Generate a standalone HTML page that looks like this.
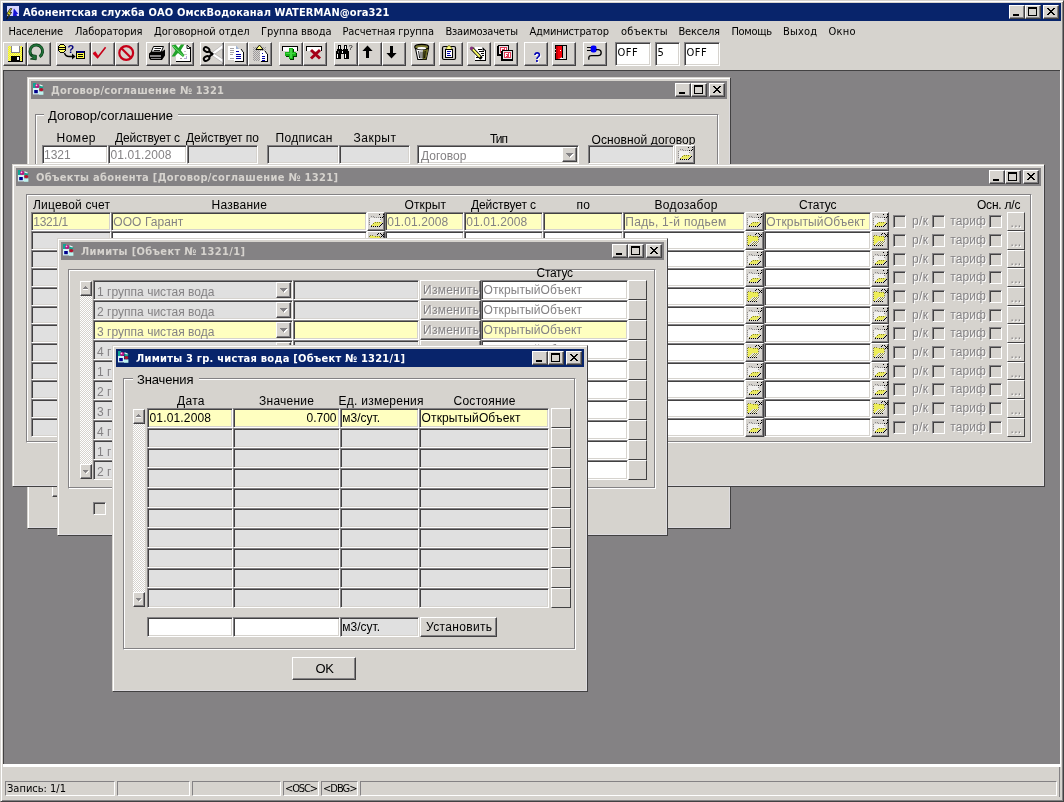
<!DOCTYPE html><html lang="ru"><head><meta charset="utf-8"><title>Абонентская служба ОАО ОмскВодоканал</title>
<style>

html,body{margin:0;padding:0}
body{width:1064px;height:802px;overflow:hidden;background:#d6d3ce;position:relative;font-family:"Liberation Sans",sans-serif;}
div,span,svg{box-sizing:border-box}
body div{position:absolute}
#root{left:0;top:0;width:1064px;height:802px;will-change:transform;}
.t{position:absolute;white-space:pre;}
.tt{font-family:"DejaVu Sans Condensed","DejaVu Sans","Liberation Sans",sans-serif;font-stretch:condensed}
.f{border:1px solid;border-color:#848284 #ffffff #ffffff #848284;box-shadow:inset 1px 1px 0 #424142, inset -1px -1px 0 #d6d3ce;}
.b{background:#d6d3ce;border:1px solid;border-color:#ffffff #424142 #424142 #ffffff;box-shadow:inset -1px -1px 0 #848284;}
.b1{background:#d6d3ce;border:1px solid;border-color:#ffffff #424142 #424142 #ffffff;}
.cb{background:#d6d3ce;border:1px solid;border-color:#ffffff #424142 #424142 #ffffff;box-shadow:inset -1px -1px 0 #848284, inset 1px 1px 0 #d6d3ce;}
.w{background:#d6d3ce;border:1px solid;border-color:#d6d3ce #424142 #424142 #d6d3ce;box-shadow:inset 1px 1px 0 #ffffff, inset -1px -1px 0 #848284;}
.wc{background:#d6d3ce;border:1px solid;border-color:#d6d3ce #424142 #424142 #d6d3ce;box-shadow:inset 1px 1px 0 #ffffff, inset -1px -1px 0 #dedcdf;}
.e{border:1px solid;border-color:#848284 #ffffff #ffffff #848284;box-shadow:inset 1px 1px 0 #ffffff;}
.e:after{content:"";position:absolute;left:-1px;top:-1px;right:0;bottom:0;border:1px solid;border-color:transparent #848284 #848284 transparent;}
.ck{background:#d6d3ce;border:1px solid;border-color:#848284 #ffffff #ffffff #848284;box-shadow:inset 1px 1px 0 #424142, inset -1px -1px 0 #d6d3ce;}
.sf{border:1px solid;border-color:#848284 #ffffff #ffffff #848284;}
.dith{background-image:repeating-conic-gradient(#ffffff 0% 25%, #d6d3ce 0% 50%);background-size:2px 2px;}
.dis{color:#848284;text-shadow:1px 1px 0 #ffffff;}

</style></head><body><div id="root">
<div class="w" style="left:0px;top:0px;width:1064px;height:802px;"></div>
<div class="" style="left:3px;top:3px;width:1058px;height:18px;background:#08246b;"></div>
<div style="left:5px;top:5px;width:15px;height:15px"><svg width="15" height="15" viewBox="5 5 15 15"><rect x="7" y="6" width="12" height="10" fill="#d6d7ff" shape-rendering="crispEdges"/><path d="M14 8.5L18.3 14H16.6L17 16H13L13.6 9.5Z" fill="#1414d6"/><path d="M10.2 8.6L6.6 14.2H8.8L6.8 19.2L11.6 12.4H9.6L11.8 8.6Z" fill="#e7e71c" stroke="#101010" stroke-width="0.8"/></svg></div>
<span id="t1" class="t tt" style="top:7px;font-size:11px;line-height:11px;color:#fff;left:23.00px;font-weight:bold;letter-spacing:0.131px;">Абонентская служба ОАО ОмскВодоканал WATERMAN@ora321</span>
<div class="cb" style="left:1043px;top:5px;width:16px;height:14px;"><svg width="8" height="7" viewBox="0 0 8 7" shape-rendering="crispEdges" style="position:absolute;left:3px;top:2px"><path d="M0 0h2v1h1v1h2v-1h1v-1h2v1h-1v1h-1v1h-1v1h1v1h1v1h1v1h-2v-1h-1v-1h-2v1h-1v1h-2v-1h1v-1h1v-1h1v-1h-1v-1h-1v-1h-1z" fill="#000"/></svg></div>
<div class="cb" style="left:1025px;top:5px;width:16px;height:14px;"><svg width="9" height="9" viewBox="0 0 9 9" shape-rendering="crispEdges" style="position:absolute;left:2px;top:1px"><path d="M0 0h9v9h-9zM1 2v6h7v-6z" fill="#000" fill-rule="evenodd"/></svg></div>
<div class="cb" style="left:1009px;top:5px;width:16px;height:14px;"><svg width="6" height="2" viewBox="0 0 6 2" shape-rendering="crispEdges" style="position:absolute;left:3px;top:8px"><rect width="6" height="2" fill="#000"/></svg></div>
<span id="t2" class="t tt" style="top:26px;font-size:11px;line-height:11px;color:#000;left:8.50px;letter-spacing:-0.244px;">Население</span>
<span id="t3" class="t tt" style="top:26px;font-size:11px;line-height:11px;color:#000;left:75.00px;letter-spacing:-0.100px;">Лаборатория</span>
<span id="t4" class="t tt" style="top:26px;font-size:11px;line-height:11px;color:#000;left:154.00px;letter-spacing:-0.059px;">Договорной отдел</span>
<span id="t5" class="t tt" style="top:26px;font-size:11px;line-height:11px;color:#000;left:261.00px;letter-spacing:-0.041px;">Группа ввода</span>
<span id="t6" class="t tt" style="top:26px;font-size:11px;line-height:11px;color:#000;left:342.50px;letter-spacing:-0.110px;">Расчетная группа</span>
<span id="t7" class="t tt" style="top:26px;font-size:11px;line-height:11px;color:#000;left:445.50px;letter-spacing:-0.220px;">Взаимозачеты</span>
<span id="t8" class="t tt" style="top:26px;font-size:11px;line-height:11px;color:#000;left:529.50px;letter-spacing:-0.214px;">Администратор</span>
<span id="t9" class="t tt" style="top:26px;font-size:11px;line-height:11px;color:#000;left:621.00px;letter-spacing:0.284px;">объекты</span>
<span id="t10" class="t tt" style="top:26px;font-size:11px;line-height:11px;color:#000;left:678.50px;letter-spacing:-0.195px;">Векселя</span>
<span id="t11" class="t tt" style="top:26px;font-size:11px;line-height:11px;color:#000;left:731.50px;letter-spacing:-0.338px;">Помощь</span>
<span id="t12" class="t tt" style="top:26px;font-size:11px;line-height:11px;color:#000;left:783.00px;letter-spacing:0.160px;">Выход</span>
<span id="t13" class="t tt" style="top:26px;font-size:11px;line-height:11px;color:#000;left:828.50px;letter-spacing:0.234px;">Окно</span>
<div class="b" style="left:3px;top:42px;width:24px;height:24px;"><svg width="24" height="24" viewBox="3 42 24 24" style="position:absolute;left:-1px;top:-1px"><defs><pattern id="dy" width="2" height="2" patternUnits="userSpaceOnUse"><rect width="2" height="2" fill="#ffff00"/><rect width="1" height="1" fill="#e7e794"/><rect x="1" y="1" width="1" height="1" fill="#e7e794"/></pattern></defs><g shape-rendering="crispEdges"><rect x="8" y="46" width="15" height="16" fill="#000" /><rect x="8" y="46" width="14" height="15" fill="url(#dy)" /><rect x="11" y="46" width="9" height="7" fill="#848284" /><rect x="12" y="46" width="7" height="6" fill="#fff" /><rect x="11" y="56" width="9" height="6" fill="#000" /><rect x="17" y="57" width="2" height="3" fill="#fff" /><rect x="22" y="46" width="1" height="1" fill="#d6d3ce" /></g></svg></div>
<div class="b" style="left:27px;top:42px;width:24px;height:24px;"><svg width="24" height="24" viewBox="27 42 24 24" style="position:absolute;left:-1px;top:-1px"><path d="M39.6 56.6A6.3 6.3 0 1 0 32.4 56.2" fill="none" stroke="#0c3c18" stroke-width="3"/><path d="M39.6 56.6A6.3 6.3 0 1 0 32.4 56.2" fill="none" stroke="#21753a" stroke-width="1.5"/><path d="M30.6 54.6L36.4 55.4L36.2 59.8L30.4 59L33.2 58Z" fill="#21753a" stroke="#0c3c18" stroke-width="0.9"/></svg></div>
<div class="b" style="left:56px;top:42px;width:35px;height:24px;"><svg width="35" height="24" viewBox="56 42 35 24" style="position:absolute;left:-1px;top:-1px"><g shape-rendering="crispEdges"><rect x="58" y="46" width="8" height="5" fill="#000" /><rect x="59" y="45" width="6" height="7" fill="#000" /><rect x="60" y="44" width="4" height="9" fill="#000" /><rect x="60" y="45" width="4" height="1" fill="#ffff63" /><rect x="59" y="46" width="6" height="1" fill="#ffff63" /><rect x="59" y="48" width="6" height="1" fill="#ffff63" /><rect x="59" y="50" width="6" height="1" fill="#ffff63" /><rect x="60" y="51" width="4" height="1" fill="#ffff63" /><rect x="76" y="51" width="9" height="8" fill="#000" /><rect x="77" y="51" width="7" height="2" fill="#00007b" /><rect x="77" y="53" width="7" height="5" fill="#ffff42" /><rect x="78" y="54" width="5" height="1" fill="#000" /><rect x="78" y="56" width="5" height="1" fill="#000" /></g><path d="M64.5 53Q65.5 56.5 69 56.5H73" fill="none" stroke="#000" stroke-width="1.3"/><path d="M72 53.5L75.5 56.5L72 59.5Z" fill="#000"/><text x="67.6" y="53" font-family="Liberation Sans,sans-serif" font-weight="bold" font-size="11" fill="#00007b">?</text></svg></div>
<div class="b" style="left:91px;top:42px;width:24px;height:24px;"><svg width="24" height="24" viewBox="91 42 24 24" style="position:absolute;left:-1px;top:-1px"><path d="M93.3 53.2L97.6 57.6L105.6 47.2" fill="none" stroke="#c60018" stroke-width="1.6"/><path d="M93 53L95.3 51.2L98 55.3L97.4 58.2Z" fill="#d6001c"/></svg></div>
<div class="b" style="left:115px;top:42px;width:24px;height:24px;"><svg width="24" height="24" viewBox="115 42 24 24" style="position:absolute;left:-1px;top:-1px"><circle cx="126.2" cy="53" r="6.9" fill="none" stroke="#c60018" stroke-width="2.2"/><path d="M121.2 48L131.2 58" stroke="#c60018" stroke-width="2.2"/></svg></div>
<div class="b" style="left:146px;top:42px;width:24px;height:24px;"><svg width="24" height="24" viewBox="146 42 24 24" style="position:absolute;left:-1px;top:-1px"><path d="M153.5 46.5H163.5L161 52.5H151Z" fill="#fff" stroke="#000" stroke-width="1"/><path d="M154.5 48.5H161M153.8 50.5H160" stroke="#000" stroke-width="0.9"/><path d="M149 53.5L151.5 51.5H162L165 49.5V55.5L162 60H150.5L149 58Z" fill="#000"/><g shape-rendering="crispEdges"><rect x="150" y="55" width="11" height="2" fill="#848284" /><rect x="151" y="58" width="10" height="1" fill="#848284" /></g></svg></div>
<div class="b" style="left:170px;top:42px;width:24px;height:24px;"><svg width="24" height="24" viewBox="170 42 24 24" style="position:absolute;left:-1px;top:-1px"><g shape-rendering="crispEdges"><rect x="176" y="45" width="12" height="17" fill="#fff" /><rect x="188" y="47" width="2" height="15" fill="#fff" /><rect x="190" y="47" width="1" height="15" fill="#000" /><rect x="176" y="61" width="15" height="1" fill="#000" /><rect x="176" y="62" width="15" height="0" fill="#000" /><rect x="184" y="51" width="2" height="1" fill="#c6c3c6" /><rect x="184" y="54" width="3" height="1" fill="#c6c3c6" /><rect x="180" y="58" width="2" height="1" fill="#b59ca5" /><rect x="184" y="58" width="3" height="1" fill="#b5aad6" /><rect x="186" y="56" width="1" height="2" fill="#b5aad6" /></g><path d="M187 45L190.5 48.5H187Z" fill="#fff" stroke="#000" stroke-width="0.9"/><path d="M171.6 45.6L175.6 44.6L178.4 48L181 44.6H184.4L180.8 50.2L184.4 55.2L183 57L178 53L174.6 56.4H171.6L175.4 50.4Z" fill="#21a229"/><path d="M173 46L183.5 56" stroke="#7be77b" stroke-width="0.9"/></svg></div>
<div class="b" style="left:200px;top:42px;width:24px;height:24px;"><svg width="24" height="24" viewBox="200 42 24 24" style="position:absolute;left:-1px;top:-1px"><path d="M211.5 53L222.6 44.6V48.4L214 54.6Z" fill="#fff" stroke="#9c9a9c" stroke-width="0.5"/><path d="M211.5 55L222.6 62.6V59L214 53.4Z" fill="#fff" stroke="#9c9a9c" stroke-width="0.5"/><ellipse cx="206.6" cy="49.6" rx="3" ry="2.1" transform="rotate(30 206.6 49.6)" fill="none" stroke="#000" stroke-width="1.9"/><ellipse cx="206.6" cy="58.4" rx="3" ry="2.1" transform="rotate(-30 206.6 58.4)" fill="none" stroke="#000" stroke-width="1.9"/><path d="M209 51L213 55M209 57L213 53" stroke="#000" stroke-width="2.2"/></svg></div>
<div class="b" style="left:224px;top:42px;width:24px;height:24px;"><svg width="24" height="24" viewBox="224 42 24 24" style="position:absolute;left:-1px;top:-1px"><g shape-rendering="crispEdges"><rect x="228" y="46" width="8" height="14" fill="#fff" /><rect x="230" y="48" width="4" height="1" fill="#a5a2a5" /><rect x="230" y="50" width="4" height="1" fill="#a5a2a5" /><rect x="230" y="52" width="4" height="1" fill="#a5a2a5" /><rect x="230" y="54" width="3" height="1" fill="#a5a2a5" /><rect x="230" y="58" width="4" height="1" fill="#a5a2a5" /></g><path d="M236 45.5L239 49H236Z" fill="#9cb2d6"/><g shape-rendering="crispEdges"><rect x="234" y="49" width="7" height="12" fill="#fff" /><rect x="241" y="52" width="2" height="9" fill="#fff" /><rect x="243" y="52" width="1" height="10" fill="#000" /><rect x="235" y="61" width="9" height="1" fill="#000" /><rect x="236" y="51" width="3" height="1" fill="#0000a5" /><rect x="236" y="54" width="5" height="1" fill="#0000a5" /><rect x="236" y="56" width="5" height="1" fill="#0000a5" /><rect x="236" y="58" width="5" height="1" fill="#0000a5" /></g><path d="M241 49L244 52H241Z" fill="#fff"/><path d="M241 49L243.5 52.5" stroke="#000" stroke-width="1"/></svg></div>
<div class="b" style="left:248px;top:42px;width:24px;height:24px;"><svg width="24" height="24" viewBox="248 42 24 24" style="position:absolute;left:-1px;top:-1px"><defs><pattern id="dg" width="2" height="2" patternUnits="userSpaceOnUse"><rect width="2" height="2" fill="#d6d3ce"/><rect width="1" height="1" fill="#9c9a9c"/><rect x="1" y="1" width="1" height="1" fill="#9c9a9c"/></pattern></defs><g shape-rendering="crispEdges"><rect x="253" y="47" width="13" height="14" fill="url(#dg)" /></g><path d="M256 49.5L258 46.5Q259.5 44.5 261 46.5L263 49.5Z" fill="#ffff84" stroke="#000" stroke-width="1"/><g shape-rendering="crispEdges"><rect x="260" y="51" width="5" height="10" fill="#fff" /><rect x="265" y="54" width="2" height="7" fill="#fff" /><rect x="267" y="54" width="1" height="8" fill="#000" /><rect x="261" y="61" width="7" height="1" fill="#000" /><rect x="262" y="53" width="1" height="1" fill="#0000a5" /><rect x="262" y="56" width="3" height="1" fill="#0000a5" /><rect x="262" y="58" width="3" height="1" fill="#0000a5" /><rect x="262" y="60" width="3" height="1" fill="#0000a5" /></g><path d="M265 51L268 54H265Z" fill="#fff"/><path d="M265 51L267.5 54.5" stroke="#000" stroke-width="1"/></svg></div>
<div class="b" style="left:279px;top:42px;width:24px;height:24px;"><svg width="24" height="24" viewBox="279 42 24 24" style="position:absolute;left:-1px;top:-1px"><g shape-rendering="crispEdges"><rect x="282" y="46" width="16" height="5" fill="#000" /><rect x="283" y="47" width="14" height="4" fill="#fff" /><rect x="290" y="49" width="4" height="11" fill="#003c00" /><rect x="286" y="53" width="11" height="4" fill="#003c00" /><rect x="289" y="48" width="4" height="11" fill="#18b218" /><rect x="285" y="52" width="11" height="4" fill="#18b218" /><rect x="290" y="49" width="2" height="9" fill="#42d742" /><rect x="286" y="53" width="9" height="1" fill="#42d742" /></g></svg></div>
<div class="b" style="left:303px;top:42px;width:24px;height:24px;"><svg width="24" height="24" viewBox="303 42 24 24" style="position:absolute;left:-1px;top:-1px"><g shape-rendering="crispEdges"><rect x="306" y="46" width="16" height="5" fill="#000" /><rect x="307" y="47" width="14" height="4" fill="#fff" /></g><path d="M311 50L320 58.5M320 50L311 58.5" stroke="#a50018" stroke-width="3"/></svg></div>
<div class="b" style="left:334px;top:42px;width:24px;height:24px;"><svg width="24" height="24" viewBox="334 42 24 24" style="position:absolute;left:-1px;top:-1px"><g shape-rendering="crispEdges"><rect x="338" y="45" width="3" height="4" fill="#000" /><rect x="344" y="45" width="3" height="4" fill="#000" /><rect x="339" y="46" width="1" height="3" fill="#fff" /><rect x="345" y="46" width="1" height="3" fill="#fff" /><rect x="337" y="49" width="5" height="4" fill="#000" /><rect x="343" y="49" width="5" height="4" fill="#000" /><rect x="336" y="51" width="5" height="8" fill="#000" /><rect x="344" y="51" width="5" height="8" fill="#000" /><rect x="341" y="50" width="3" height="4" fill="#000" /><rect x="337" y="54" width="1" height="4" fill="#fff" /><rect x="345" y="54" width="1" height="4" fill="#fff" /><rect x="342" y="51" width="1" height="2" fill="#fff" /><rect x="338" y="51" width="1" height="2" fill="#5a595a" /></g><text x="348.6" y="50" font-family="Liberation Sans,sans-serif" font-size="7.5" fill="#000">?</text></svg></div>
<div class="b" style="left:358px;top:42px;width:24px;height:24px;"><svg width="24" height="24" viewBox="358 42 24 24" style="position:absolute;left:-1px;top:-1px"><path d="M367.5 45.6L372.6 51H369V58H366V51H362.4Z" fill="#000"/></svg></div>
<div class="b" style="left:382px;top:42px;width:24px;height:24px;"><svg width="24" height="24" viewBox="382 42 24 24" style="position:absolute;left:-1px;top:-1px"><path d="M391.5 58.4L396.6 53H393V46H390V53H386.4Z" fill="#000"/></svg></div>
<div class="b" style="left:411px;top:42px;width:24px;height:24px;"><svg width="24" height="24" viewBox="411 42 24 24" style="position:absolute;left:-1px;top:-1px"><path d="M415.5 48.5L417.8 59.5H426.2L428.5 48.5Z" fill="#fff" stroke="#000" stroke-width="1.1"/><path d="M423 49L422.5 59.2H426L428.2 49Z" fill="#6b6921"/><ellipse cx="421.7" cy="47" rx="7" ry="2.6" fill="#7b7931" stroke="#000" stroke-width="1.1"/><ellipse cx="421.7" cy="48.2" rx="4.4" ry="1.2" fill="#fff"/><path d="M418.6 51L419.6 58M421 51.5V58.5M423 51.5V58.5M425.2 51L424.6 58" stroke="#000" stroke-width="0.9"/></svg></div>
<div class="b" style="left:439px;top:42px;width:24px;height:24px;"><svg width="24" height="24" viewBox="439 42 24 24" style="position:absolute;left:-1px;top:-1px"><rect x="442.5" y="46.5" width="13" height="13" rx="1.5" fill="#d6d3ce" stroke="#000" stroke-width="1.2"/><path d="M445.5 49.5L447.5 46.5Q449 44.5 450.5 46.5L452.5 49.5Z" fill="#ffff84" stroke="#5a5900" stroke-width="0.8"/><g shape-rendering="crispEdges"><rect x="445" y="49" width="8" height="9" fill="#000" /><rect x="446" y="50" width="6" height="7" fill="#fff" /><rect x="447" y="51" width="4" height="1" fill="#0000a5" /><rect x="447" y="53" width="3" height="1" fill="#0000a5" /><rect x="447" y="55" width="4" height="1" fill="#0000a5" /></g></svg></div>
<div class="b" style="left:467px;top:42px;width:24px;height:24px;"><svg width="24" height="24" viewBox="467 42 24 24" style="position:absolute;left:-1px;top:-1px"><g shape-rendering="crispEdges"><rect x="475" y="47" width="8" height="13" fill="#fff" /><rect x="483" y="50" width="2" height="10" fill="#fff" /><rect x="485" y="50" width="1" height="11" fill="#000" /><rect x="475" y="60" width="11" height="1" fill="#000" /><rect x="478" y="49" width="4" height="1" fill="#000" /><rect x="479" y="51" width="5" height="1" fill="#000" /><rect x="481" y="53" width="3" height="1" fill="#000" /><rect x="482" y="55" width="2" height="1" fill="#000" /><rect x="476" y="57" width="3" height="1" fill="#000" /><rect x="477" y="55" width="2" height="1" fill="#000" /></g><path d="M482.5 47L486 50.5H482.5Z" fill="#000"/><path d="M471.5 48L481.5 58.5" stroke="#000" stroke-width="3.4"/><path d="M472.6 49.1L480 57" stroke="#f7f763" stroke-width="1.9"/><circle cx="471.6" cy="48.2" r="1.7" fill="#84307b"/><path d="M480 57L482.3 59.3L479.2 58.4Z" fill="#000"/></svg></div>
<div class="b" style="left:494px;top:42px;width:24px;height:24px;"><svg width="24" height="24" viewBox="494 42 24 24" style="position:absolute;left:-1px;top:-1px"><g shape-rendering="crispEdges"><rect x="497" y="46" width="12" height="10" fill="#000" /><rect x="498" y="45" width="11" height="10" fill="#000" /><rect x="499" y="46" width="9" height="8" fill="#e7e3e7" /><rect x="500" y="47" width="7" height="6" fill="#e0405a" /><rect x="501" y="48" width="1" height="4" fill="#fff" /><rect x="502" y="48" width="2" height="1" fill="#fff" /><rect x="502" y="50" width="1" height="1" fill="#fff" /><rect x="505" y="48" width="1" height="4" fill="#fff" /><rect x="501" y="51" width="12" height="10" fill="#000" /><rect x="502" y="50" width="11" height="10" fill="#000" /><rect x="503" y="51" width="9" height="8" fill="#e7e3e7" /><rect x="504" y="52" width="7" height="6" fill="#e0405a" /><rect x="505" y="53" width="1" height="4" fill="#fff" /><rect x="506" y="53" width="2" height="1" fill="#fff" /><rect x="506" y="55" width="1" height="1" fill="#fff" /><rect x="509" y="53" width="1" height="4" fill="#fff" /></g></svg></div>
<div class="b" style="left:524px;top:42px;width:24px;height:24px;"><svg width="24" height="24" viewBox="524 42 24 24" style="position:absolute;left:-1px;top:-1px"><text x="534.4" y="62.6" font-family="Liberation Sans,sans-serif" font-weight="bold" font-size="14" textLength="7.4" lengthAdjust="spacingAndGlyphs" fill="#fff">?</text><text x="533.6" y="62" font-family="Liberation Sans,sans-serif" font-weight="bold" font-size="14" textLength="7.4" lengthAdjust="spacingAndGlyphs" fill="#0000b5">?</text></svg></div>
<div class="b" style="left:552px;top:42px;width:24px;height:24px;"><svg width="24" height="24" viewBox="552 42 24 24" style="position:absolute;left:-1px;top:-1px"><g shape-rendering="crispEdges"><rect x="555" y="45" width="12" height="15" fill="#000" /><rect x="556" y="46" width="10" height="13" fill="#d6d3ce" /><rect x="562" y="46" width="1" height="12" fill="#000" /><rect x="559" y="58" width="4" height="1" fill="#fff" /></g><path d="M556 46H562V57L559.5 58.8H556Z" fill="#f70008"/><path d="M556 46H558V59H556Z" fill="#c60008"/><g shape-rendering="crispEdges"><rect x="560" y="50" width="1" height="1" fill="#fff" /><rect x="555" y="49" width="1" height="1" fill="#d6d3ce" /><rect x="555" y="52" width="1" height="1" fill="#d6d3ce" /></g></svg></div>
<div class="b" style="left:583px;top:42px;width:24px;height:24px;"><svg width="24" height="24" viewBox="583 42 24 24" style="position:absolute;left:-1px;top:-1px"><g shape-rendering="crispEdges"><rect x="587" y="47" width="5" height="1" fill="#000"/><rect x="587" y="50" width="5" height="1" fill="#000"/></g><rect x="590.6" y="45.6" width="6" height="7" rx="2.4" fill="#0000f7"/><path d="M596 49.6H598.5Q601.3 50 601.2 53Q601 55.6 598 55.6H591.5Q589 55.6 588.8 57.5V59.8" fill="none" stroke="#000" stroke-width="1.3"/></svg></div>
<div class="f" style="left:615px;top:42px;width:36px;height:24px;background:#ffffff;"></div>
<span id="t14" class="t tt" style="top:47px;font-size:11px;line-height:11px;color:#000;left:617.40px;letter-spacing:0.606px;">OFF</span>
<div class="f" style="left:655px;top:42px;width:25px;height:24px;background:#ffffff;"></div>
<span id="t15" class="t tt" style="top:47px;font-size:11px;line-height:11px;color:#000;left:657.40px;">5</span>
<div class="f" style="left:684px;top:42px;width:36px;height:24px;background:#ffffff;"></div>
<span id="t16" class="t tt" style="top:47px;font-size:11px;line-height:11px;color:#000;left:686.40px;letter-spacing:0.606px;">OFF</span>
<div class="" style="left:3px;top:70px;width:1058px;height:697px;background:#ffffff;"></div>
<div class="" style="left:3px;top:70px;width:1057px;height:694px;background:#848284;border-top:1px solid #424142;border-left:1px solid #424142;"></div>
<div class="" style="left:1059px;top:767px;width:1px;height:30px;background:#848284;"></div>
<div class="wc" style="left:27px;top:77px;width:704px;height:452px;"></div>
<div class="tb" style="left:31px;top:81px;width:696px;height:18px;background:#848284;"></div>
<div style="left:33px;top:82px;width:12px;height:13px"><svg width="12" height="13" viewBox="0 0 12 13"><rect x="0" y="0" width="3" height="6" fill="#10a694"/><rect x="0" y="5" width="6" height="6.4" fill="#d6f3f7"/><rect x="6" y="8.4" width="4.4" height="3.4" fill="#bdf3ef"/><path d="M6.4 2.2L10.6 3.4L9.6 5.6H6.6Z" fill="#18a28c"/><path d="M6.6 1.2L9.8 2.6L9.4 3.4L6.4 2.4Z" fill="#e7f7f7"/><rect x="1.2" y="7" width="3.6" height="3.2" fill="#00008c"/><ellipse cx="8.3" cy="6.6" rx="1.9" ry="1.7" fill="#b5102c"/><circle cx="4.1" cy="3" r="2.1" fill="#bd1084"/><circle cx="3.5" cy="2.4" r="0.8" fill="#ffc7ef"/></svg></div>
<span id="t17" class="t tt" style="top:85px;font-size:11px;line-height:11px;color:#d6d3ce;left:51.00px;font-weight:bold;letter-spacing:0.243px;">Договор/соглашение № 1321</span>
<div class="cb" style="left:709px;top:83px;width:16px;height:14px;"><svg width="8" height="7" viewBox="0 0 8 7" shape-rendering="crispEdges" style="position:absolute;left:3px;top:2px"><path d="M0 0h2v1h1v1h2v-1h1v-1h2v1h-1v1h-1v1h-1v1h1v1h1v1h1v1h-2v-1h-1v-1h-2v1h-1v1h-2v-1h1v-1h1v-1h1v-1h-1v-1h-1v-1h-1z" fill="#000"/></svg></div>
<div class="cb" style="left:691px;top:83px;width:16px;height:14px;"><svg width="9" height="9" viewBox="0 0 9 9" shape-rendering="crispEdges" style="position:absolute;left:2px;top:1px"><path d="M0 0h9v9h-9zM1 2v6h7v-6z" fill="#000" fill-rule="evenodd"/></svg></div>
<div class="cb" style="left:675px;top:83px;width:16px;height:14px;"><svg width="6" height="2" viewBox="0 0 6 2" shape-rendering="crispEdges" style="position:absolute;left:3px;top:8px"><rect width="6" height="2" fill="#000"/></svg></div>
<div class="e" style="left:35px;top:114px;width:684px;height:356px;"></div>
<div class="" style="left:44px;top:114px;width:134px;height:2px;background:#d6d3ce;"></div>
<span id="t18" class="t " style="top:109px;font-size:13px;line-height:13px;color:#000;left:48.00px;letter-spacing:-0.011px;">Договор/соглашение</span>
<span id="t19" class="t " style="top:132px;font-size:12px;line-height:12px;color:#000;left:56.50px;letter-spacing:0.516px;">Номер</span>
<span id="t20" class="t " style="top:132px;font-size:12px;line-height:12px;color:#000;left:115.00px;letter-spacing:-0.109px;">Действует с</span>
<span id="t21" class="t " style="top:132px;font-size:12px;line-height:12px;color:#000;left:186.00px;letter-spacing:-0.024px;">Действует по</span>
<span id="t22" class="t " style="top:132px;font-size:12px;line-height:12px;color:#000;left:275.50px;letter-spacing:0.350px;">Подписан</span>
<span id="t23" class="t " style="top:132px;font-size:12px;line-height:12px;color:#000;left:353.50px;letter-spacing:0.506px;">Закрыт</span>
<span id="t24" class="t " style="top:133px;font-size:12px;line-height:12px;color:#000;left:490.00px;letter-spacing:-1.008px;">Тип</span>
<span id="t25" class="t " style="top:134px;font-size:12px;line-height:12px;color:#000;left:591.50px;letter-spacing:0.106px;">Основной договор</span>
<div class="f" style="left:42px;top:145px;width:66px;height:19px;background:#ffffff;"></div>
<span id="t26" class="t " style="top:149px;font-size:12px;line-height:12px;color:#848284;left:44.00px;">1321</span>
<div class="f" style="left:108px;top:145px;width:79px;height:19px;background:#ffffff;"></div>
<span id="t27" class="t " style="top:149px;font-size:12px;line-height:12px;color:#848284;left:110.50px;letter-spacing:0.104px;">01.01.2008</span>
<div class="f" style="left:187px;top:145px;width:71px;height:19px;background:#e0e0e0;"></div>
<div class="f" style="left:267px;top:145px;width:72px;height:19px;background:#e0e0e0;"></div>
<div class="f" style="left:339px;top:145px;width:71px;height:19px;background:#e0e0e0;"></div>
<div class="f" style="left:417px;top:145px;width:162px;height:19px;background:#ffffff;"></div>
<span id="t28" class="t " style="top:150px;font-size:12px;line-height:12px;color:#848284;left:421.00px;">Договор</span>
<div class="b" style="left:562px;top:147px;width:15px;height:15px;"><svg width="7" height="4" viewBox="0 0 7 4" shape-rendering="crispEdges" style="position:absolute;left:3px;top:5px;overflow:visible"><path d="M1 1h7v1h-1v1h-1v1h-1v1h-1v-1h-1v-1h-1z" fill="#fff"/><path d="M0 0h7v1h-1v1h-1v1h-1v1h-1v-1h-1v-1h-1v-1h-1z" fill="#848284"/></svg></div>
<div class="f" style="left:588px;top:145px;width:86px;height:19px;background:#e0e0e0;"></div>
<div class="b" style="left:675px;top:145px;width:20px;height:19px;"><svg width="17" height="16" viewBox="0 0 17 16" style="position:absolute;left:1px;top:0px"><g shape-rendering="crispEdges"><path d="M2 5h11v4h-6l-5 4z" fill="#f1f0ee"/><path d="M3 13l3.5-4h7.5l-3 4z" fill="#e9e962"/><path d="M11 1h1v1h-1zM15 1h1v1h-1zM15 3h1v1h-1zM14 4h1v1h-1zM12 4h1v1h-1zM14 10h1v1h-1zM13 11h1v1h-1zM12 12h1v1h-1zM3 13h1v1h-1zM5 13h1v1h-1zM7 13h1v1h-1zM9 13h1v1h-1zM11 13h1v1h-1z" fill="#000"/><path d="M10 4h1v1h-1zM8 4h1v1h-1zM6 4h1v1h-1zM5 3h1v1h-1zM3 3h1v1h-1zM1 5h1v1h-1zM1 7h1v1h-1zM1 9h1v1h-1zM1 11h1v1h-1zM12 6h1v1h-1z" fill="#8c8a8c"/><path d="M7 9h1v1h-1zM9 9h1v1h-1zM11 9h1v1h-1zM5 10h1v1h-1zM3 12h1v1h-1z" fill="#84822a"/></g></svg></div>
<div class="b" style="left:52px;top:474px;width:88px;height:23px;"></div>
<div class="wc" style="left:12px;top:164px;width:1033px;height:323px;"></div>
<div class="tb" style="left:16px;top:168px;width:1025px;height:18px;background:#848284;"></div>
<div style="left:18px;top:169px;width:12px;height:13px"><svg width="12" height="13" viewBox="0 0 12 13"><rect x="0" y="0" width="3" height="6" fill="#10a694"/><rect x="0" y="5" width="6" height="6.4" fill="#d6f3f7"/><rect x="6" y="8.4" width="4.4" height="3.4" fill="#bdf3ef"/><path d="M6.4 2.2L10.6 3.4L9.6 5.6H6.6Z" fill="#18a28c"/><path d="M6.6 1.2L9.8 2.6L9.4 3.4L6.4 2.4Z" fill="#e7f7f7"/><rect x="1.2" y="7" width="3.6" height="3.2" fill="#00008c"/><ellipse cx="8.3" cy="6.6" rx="1.9" ry="1.7" fill="#b5102c"/><circle cx="4.1" cy="3" r="2.1" fill="#bd1084"/><circle cx="3.5" cy="2.4" r="0.8" fill="#ffc7ef"/></svg></div>
<span id="t29" class="t tt" style="top:172px;font-size:11px;line-height:11px;color:#d6d3ce;left:36.00px;font-weight:bold;letter-spacing:0.345px;">Объекты абонента [Договор/соглашение № 1321]</span>
<div class="cb" style="left:1023px;top:170px;width:16px;height:14px;"><svg width="8" height="7" viewBox="0 0 8 7" shape-rendering="crispEdges" style="position:absolute;left:3px;top:2px"><path d="M0 0h2v1h1v1h2v-1h1v-1h2v1h-1v1h-1v1h-1v1h1v1h1v1h1v1h-2v-1h-1v-1h-2v1h-1v1h-2v-1h1v-1h1v-1h1v-1h-1v-1h-1v-1h-1z" fill="#000"/></svg></div>
<div class="cb" style="left:1005px;top:170px;width:16px;height:14px;"><svg width="9" height="9" viewBox="0 0 9 9" shape-rendering="crispEdges" style="position:absolute;left:2px;top:1px"><path d="M0 0h9v9h-9zM1 2v6h7v-6z" fill="#000" fill-rule="evenodd"/></svg></div>
<div class="cb" style="left:989px;top:170px;width:16px;height:14px;"><svg width="6" height="2" viewBox="0 0 6 2" shape-rendering="crispEdges" style="position:absolute;left:3px;top:8px"><rect width="6" height="2" fill="#000"/></svg></div>
<div class="e" style="left:26px;top:194px;width:1006px;height:249px;"></div>
<span id="t30" class="t " style="top:199px;font-size:12px;line-height:12px;color:#000;left:33.00px;letter-spacing:0.196px;">Лицевой счет</span>
<span id="t31" class="t " style="top:199px;font-size:12px;line-height:12px;color:#000;left:211.50px;letter-spacing:0.268px;">Название</span>
<span id="t32" class="t " style="top:199px;font-size:12px;line-height:12px;color:#000;left:404.50px;letter-spacing:0.125px;">Открыт</span>
<span id="t33" class="t " style="top:199px;font-size:12px;line-height:12px;color:#000;left:471.00px;letter-spacing:-0.109px;">Действует с</span>
<span id="t34" class="t " style="top:199px;font-size:12px;line-height:12px;color:#000;left:576.50px;letter-spacing:0.328px;">по</span>
<span id="t35" class="t " style="top:199px;font-size:12px;line-height:12px;color:#000;left:654.50px;letter-spacing:0.330px;">Водозабор</span>
<span id="t36" class="t " style="top:199px;font-size:12px;line-height:12px;color:#000;left:799.00px;letter-spacing:-0.087px;">Статус</span>
<span id="t37" class="t " style="top:199px;font-size:12px;line-height:12px;color:#000;left:977.00px;letter-spacing:-0.210px;">Осн. л/с</span>
<div class="f" style="left:31px;top:212px;width:80px;height:19px;background:#ffffc0;"></div>
<span id="t38" class="t " style="top:216px;font-size:12px;line-height:12px;color:#848284;left:33.30px;letter-spacing:-0.341px;">1321/1</span>
<div class="f" style="left:111px;top:212px;width:256px;height:19px;background:#ffffc0;"></div>
<span id="t39" class="t " style="top:216px;font-size:12px;line-height:12px;color:#848284;left:113.30px;letter-spacing:0.076px;">ООО Гарант</span>
<div class="f" style="left:385px;top:212px;width:79px;height:19px;background:#ffffc0;"></div>
<span id="t40" class="t " style="top:216px;font-size:12px;line-height:12px;color:#848284;left:387.30px;letter-spacing:0.104px;">01.01.2008</span>
<div class="f" style="left:464px;top:212px;width:79px;height:19px;background:#ffffc0;"></div>
<span id="t41" class="t " style="top:216px;font-size:12px;line-height:12px;color:#848284;left:466.30px;letter-spacing:0.104px;">01.01.2008</span>
<div class="f" style="left:543px;top:212px;width:80px;height:19px;background:#ffffc0;"></div>
<div class="f" style="left:623px;top:212px;width:122px;height:19px;background:#ffffc0;"></div>
<span id="t42" class="t " style="top:216px;font-size:12px;line-height:12px;color:#848284;left:625.30px;letter-spacing:0.266px;">Падь, 1-й подьем</span>
<div class="f" style="left:764px;top:212px;width:107px;height:19px;background:#ffffc0;"></div>
<span id="t43" class="t " style="top:216px;font-size:12px;line-height:12px;color:#848284;left:766.30px;letter-spacing:0.148px;">ОткрытыйОбъект</span>
<div class="b" style="left:367px;top:212px;width:18px;height:19px;"><svg width="17" height="16" viewBox="0 0 17 16" style="position:absolute;left:0px;top:0px"><g shape-rendering="crispEdges"><path d="M2 5h11v4h-6l-5 4z" fill="#f1f0ee"/><path d="M3 13l3.5-4h7.5l-3 4z" fill="#e9e962"/><path d="M11 1h1v1h-1zM15 1h1v1h-1zM15 3h1v1h-1zM14 4h1v1h-1zM12 4h1v1h-1zM14 10h1v1h-1zM13 11h1v1h-1zM12 12h1v1h-1zM3 13h1v1h-1zM5 13h1v1h-1zM7 13h1v1h-1zM9 13h1v1h-1zM11 13h1v1h-1z" fill="#000"/><path d="M10 4h1v1h-1zM8 4h1v1h-1zM6 4h1v1h-1zM5 3h1v1h-1zM3 3h1v1h-1zM1 5h1v1h-1zM1 7h1v1h-1zM1 9h1v1h-1zM1 11h1v1h-1zM12 6h1v1h-1z" fill="#8c8a8c"/><path d="M7 9h1v1h-1zM9 9h1v1h-1zM11 9h1v1h-1zM5 10h1v1h-1zM3 12h1v1h-1z" fill="#84822a"/></g></svg></div>
<div class="b" style="left:745px;top:212px;width:19px;height:19px;"><svg width="17" height="16" viewBox="0 0 17 16" style="position:absolute;left:0px;top:0px"><g shape-rendering="crispEdges"><path d="M2 5h11v4h-6l-5 4z" fill="#f1f0ee"/><path d="M3 13l3.5-4h7.5l-3 4z" fill="#e9e962"/><path d="M11 1h1v1h-1zM15 1h1v1h-1zM15 3h1v1h-1zM14 4h1v1h-1zM12 4h1v1h-1zM14 10h1v1h-1zM13 11h1v1h-1zM12 12h1v1h-1zM3 13h1v1h-1zM5 13h1v1h-1zM7 13h1v1h-1zM9 13h1v1h-1zM11 13h1v1h-1z" fill="#000"/><path d="M10 4h1v1h-1zM8 4h1v1h-1zM6 4h1v1h-1zM5 3h1v1h-1zM3 3h1v1h-1zM1 5h1v1h-1zM1 7h1v1h-1zM1 9h1v1h-1zM1 11h1v1h-1zM12 6h1v1h-1z" fill="#8c8a8c"/><path d="M7 9h1v1h-1zM9 9h1v1h-1zM11 9h1v1h-1zM5 10h1v1h-1zM3 12h1v1h-1z" fill="#84822a"/></g></svg></div>
<div class="b" style="left:871px;top:212px;width:18px;height:19px;"><svg width="17" height="16" viewBox="0 0 17 16" style="position:absolute;left:0px;top:0px"><g shape-rendering="crispEdges"><path d="M2 5h11v4h-6l-5 4z" fill="#f1f0ee"/><path d="M3 13l3.5-4h7.5l-3 4z" fill="#e9e962"/><path d="M11 1h1v1h-1zM15 1h1v1h-1zM15 3h1v1h-1zM14 4h1v1h-1zM12 4h1v1h-1zM14 10h1v1h-1zM13 11h1v1h-1zM12 12h1v1h-1zM3 13h1v1h-1zM5 13h1v1h-1zM7 13h1v1h-1zM9 13h1v1h-1zM11 13h1v1h-1z" fill="#000"/><path d="M10 4h1v1h-1zM8 4h1v1h-1zM6 4h1v1h-1zM5 3h1v1h-1zM3 3h1v1h-1zM1 5h1v1h-1zM1 7h1v1h-1zM1 9h1v1h-1zM1 11h1v1h-1zM12 6h1v1h-1z" fill="#8c8a8c"/><path d="M7 9h1v1h-1zM9 9h1v1h-1zM11 9h1v1h-1zM5 10h1v1h-1zM3 12h1v1h-1z" fill="#84822a"/></g></svg></div>
<div class="ck" style="left:893px;top:215px;width:13px;height:13px;"></div>
<div class="ck" style="left:932px;top:215px;width:13px;height:13px;"></div>
<div class="ck" style="left:989px;top:215px;width:13px;height:13px;"></div>
<span id="t44" class="t dis" style="top:215px;font-size:12px;line-height:12px;color:#848284;left:912.00px;letter-spacing:0.367px;">р/к</span>
<span id="t45" class="t dis" style="top:215px;font-size:12px;line-height:12px;color:#848284;left:950.30px;letter-spacing:0.051px;">тариф</span>
<div class="b1" style="left:1007px;top:212px;width:18px;height:19px;"></div>
<span id="t46" class="t dis" style="top:217px;font-size:12px;line-height:12px;color:#848284;left:1010.50px;letter-spacing:0.292px;">...</span>
<div class="f" style="left:31px;top:231px;width:80px;height:19px;background:#e0e0e0;"></div>
<div class="f" style="left:111px;top:231px;width:256px;height:19px;background:#ffffff;"></div>
<div class="f" style="left:385px;top:231px;width:79px;height:19px;background:#ffffff;"></div>
<div class="f" style="left:464px;top:231px;width:79px;height:19px;background:#ffffff;"></div>
<div class="f" style="left:543px;top:231px;width:80px;height:19px;background:#ffffff;"></div>
<div class="f" style="left:623px;top:231px;width:122px;height:19px;background:#ffffff;"></div>
<div class="f" style="left:764px;top:231px;width:107px;height:19px;background:#ffffff;"></div>
<div class="b" style="left:367px;top:231px;width:18px;height:19px;"><svg width="17" height="16" viewBox="0 0 17 16" style="position:absolute;left:0px;top:-1px"><defs><pattern id="dl" width="2" height="2" patternUnits="userSpaceOnUse"><rect width="2" height="2" fill="#f1f0ee"/><rect width="1" height="1" fill="#8c8a4a"/><rect x="1" y="1" width="1" height="1" fill="#8c8a4a"/></pattern></defs><g shape-rendering="crispEdges"><path d="M2 5h10v5h-5l-5 4z" fill="#eded58"/><path d="M7 10h7l-3 4h-8z" fill="url(#dl)"/><path d="M10 2h1v1h-1zM12 2h1v1h-1zM9 3h1v1h-1zM13 3h1v1h-1zM15 3h1v1h-1zM14 4h1v1h-1zM13 5h1v1h-1zM15 5h1v1h-1zM2 14h1v1h-1zM4 14h1v1h-1zM6 14h1v1h-1zM8 14h1v1h-1zM10 14h1v1h-1z" fill="#000"/><path d="M2 4h1v1h-1zM4 4h1v1h-1zM1 5h1v1h-1zM1 7h1v1h-1zM1 9h1v1h-1zM1 11h1v1h-1zM1 13h1v1h-1zM7 5h1v1h-1zM9 5h1v1h-1zM11 5h1v1h-1zM12 6h1v1h-1zM12 8h1v1h-1z" fill="#84822a"/></g></svg></div>
<div class="b" style="left:745px;top:231px;width:19px;height:19px;"><svg width="17" height="16" viewBox="0 0 17 16" style="position:absolute;left:0px;top:-1px"><defs><pattern id="dl" width="2" height="2" patternUnits="userSpaceOnUse"><rect width="2" height="2" fill="#f1f0ee"/><rect width="1" height="1" fill="#8c8a4a"/><rect x="1" y="1" width="1" height="1" fill="#8c8a4a"/></pattern></defs><g shape-rendering="crispEdges"><path d="M2 5h10v5h-5l-5 4z" fill="#eded58"/><path d="M7 10h7l-3 4h-8z" fill="url(#dl)"/><path d="M10 2h1v1h-1zM12 2h1v1h-1zM9 3h1v1h-1zM13 3h1v1h-1zM15 3h1v1h-1zM14 4h1v1h-1zM13 5h1v1h-1zM15 5h1v1h-1zM2 14h1v1h-1zM4 14h1v1h-1zM6 14h1v1h-1zM8 14h1v1h-1zM10 14h1v1h-1z" fill="#000"/><path d="M2 4h1v1h-1zM4 4h1v1h-1zM1 5h1v1h-1zM1 7h1v1h-1zM1 9h1v1h-1zM1 11h1v1h-1zM1 13h1v1h-1zM7 5h1v1h-1zM9 5h1v1h-1zM11 5h1v1h-1zM12 6h1v1h-1zM12 8h1v1h-1z" fill="#84822a"/></g></svg></div>
<div class="b" style="left:871px;top:231px;width:18px;height:19px;"><svg width="17" height="16" viewBox="0 0 17 16" style="position:absolute;left:0px;top:-1px"><defs><pattern id="dl" width="2" height="2" patternUnits="userSpaceOnUse"><rect width="2" height="2" fill="#f1f0ee"/><rect width="1" height="1" fill="#8c8a4a"/><rect x="1" y="1" width="1" height="1" fill="#8c8a4a"/></pattern></defs><g shape-rendering="crispEdges"><path d="M2 5h10v5h-5l-5 4z" fill="#eded58"/><path d="M7 10h7l-3 4h-8z" fill="url(#dl)"/><path d="M10 2h1v1h-1zM12 2h1v1h-1zM9 3h1v1h-1zM13 3h1v1h-1zM15 3h1v1h-1zM14 4h1v1h-1zM13 5h1v1h-1zM15 5h1v1h-1zM2 14h1v1h-1zM4 14h1v1h-1zM6 14h1v1h-1zM8 14h1v1h-1zM10 14h1v1h-1z" fill="#000"/><path d="M2 4h1v1h-1zM4 4h1v1h-1zM1 5h1v1h-1zM1 7h1v1h-1zM1 9h1v1h-1zM1 11h1v1h-1zM1 13h1v1h-1zM7 5h1v1h-1zM9 5h1v1h-1zM11 5h1v1h-1zM12 6h1v1h-1zM12 8h1v1h-1z" fill="#84822a"/></g></svg></div>
<div class="ck" style="left:893px;top:234px;width:13px;height:13px;"></div>
<div class="ck" style="left:932px;top:234px;width:13px;height:13px;"></div>
<div class="ck" style="left:989px;top:234px;width:13px;height:13px;"></div>
<span id="t47" class="t dis" style="top:234px;font-size:12px;line-height:12px;color:#848284;left:912.00px;letter-spacing:0.367px;">р/к</span>
<span id="t48" class="t dis" style="top:234px;font-size:12px;line-height:12px;color:#848284;left:950.30px;letter-spacing:0.051px;">тариф</span>
<div class="b1" style="left:1007px;top:231px;width:18px;height:19px;"></div>
<span id="t49" class="t dis" style="top:236px;font-size:12px;line-height:12px;color:#848284;left:1010.50px;letter-spacing:0.292px;">...</span>
<div class="f" style="left:31px;top:250px;width:80px;height:18px;background:#e0e0e0;"></div>
<div class="f" style="left:111px;top:250px;width:256px;height:18px;background:#ffffff;"></div>
<div class="f" style="left:385px;top:250px;width:79px;height:18px;background:#ffffff;"></div>
<div class="f" style="left:464px;top:250px;width:79px;height:18px;background:#ffffff;"></div>
<div class="f" style="left:543px;top:250px;width:80px;height:18px;background:#ffffff;"></div>
<div class="f" style="left:623px;top:250px;width:122px;height:18px;background:#ffffff;"></div>
<div class="f" style="left:764px;top:250px;width:107px;height:18px;background:#ffffff;"></div>
<div class="b" style="left:367px;top:250px;width:18px;height:18px;"><svg width="17" height="16" viewBox="0 0 17 16" style="position:absolute;left:0px;top:0px"><g shape-rendering="crispEdges"><path d="M2 5h11v4h-6l-5 4z" fill="#f1f0ee"/><path d="M3 13l3.5-4h7.5l-3 4z" fill="#e9e962"/><path d="M11 1h1v1h-1zM15 1h1v1h-1zM15 3h1v1h-1zM14 4h1v1h-1zM12 4h1v1h-1zM14 10h1v1h-1zM13 11h1v1h-1zM12 12h1v1h-1zM3 13h1v1h-1zM5 13h1v1h-1zM7 13h1v1h-1zM9 13h1v1h-1zM11 13h1v1h-1z" fill="#000"/><path d="M10 4h1v1h-1zM8 4h1v1h-1zM6 4h1v1h-1zM5 3h1v1h-1zM3 3h1v1h-1zM1 5h1v1h-1zM1 7h1v1h-1zM1 9h1v1h-1zM1 11h1v1h-1zM12 6h1v1h-1z" fill="#8c8a8c"/><path d="M7 9h1v1h-1zM9 9h1v1h-1zM11 9h1v1h-1zM5 10h1v1h-1zM3 12h1v1h-1z" fill="#84822a"/></g></svg></div>
<div class="b" style="left:745px;top:250px;width:19px;height:18px;"><svg width="17" height="16" viewBox="0 0 17 16" style="position:absolute;left:0px;top:0px"><g shape-rendering="crispEdges"><path d="M2 5h11v4h-6l-5 4z" fill="#f1f0ee"/><path d="M3 13l3.5-4h7.5l-3 4z" fill="#e9e962"/><path d="M11 1h1v1h-1zM15 1h1v1h-1zM15 3h1v1h-1zM14 4h1v1h-1zM12 4h1v1h-1zM14 10h1v1h-1zM13 11h1v1h-1zM12 12h1v1h-1zM3 13h1v1h-1zM5 13h1v1h-1zM7 13h1v1h-1zM9 13h1v1h-1zM11 13h1v1h-1z" fill="#000"/><path d="M10 4h1v1h-1zM8 4h1v1h-1zM6 4h1v1h-1zM5 3h1v1h-1zM3 3h1v1h-1zM1 5h1v1h-1zM1 7h1v1h-1zM1 9h1v1h-1zM1 11h1v1h-1zM12 6h1v1h-1z" fill="#8c8a8c"/><path d="M7 9h1v1h-1zM9 9h1v1h-1zM11 9h1v1h-1zM5 10h1v1h-1zM3 12h1v1h-1z" fill="#84822a"/></g></svg></div>
<div class="b" style="left:871px;top:250px;width:18px;height:18px;"><svg width="17" height="16" viewBox="0 0 17 16" style="position:absolute;left:0px;top:0px"><g shape-rendering="crispEdges"><path d="M2 5h11v4h-6l-5 4z" fill="#f1f0ee"/><path d="M3 13l3.5-4h7.5l-3 4z" fill="#e9e962"/><path d="M11 1h1v1h-1zM15 1h1v1h-1zM15 3h1v1h-1zM14 4h1v1h-1zM12 4h1v1h-1zM14 10h1v1h-1zM13 11h1v1h-1zM12 12h1v1h-1zM3 13h1v1h-1zM5 13h1v1h-1zM7 13h1v1h-1zM9 13h1v1h-1zM11 13h1v1h-1z" fill="#000"/><path d="M10 4h1v1h-1zM8 4h1v1h-1zM6 4h1v1h-1zM5 3h1v1h-1zM3 3h1v1h-1zM1 5h1v1h-1zM1 7h1v1h-1zM1 9h1v1h-1zM1 11h1v1h-1zM12 6h1v1h-1z" fill="#8c8a8c"/><path d="M7 9h1v1h-1zM9 9h1v1h-1zM11 9h1v1h-1zM5 10h1v1h-1zM3 12h1v1h-1z" fill="#84822a"/></g></svg></div>
<div class="ck" style="left:893px;top:253px;width:13px;height:13px;"></div>
<div class="ck" style="left:932px;top:253px;width:13px;height:13px;"></div>
<div class="ck" style="left:989px;top:253px;width:13px;height:13px;"></div>
<span id="t50" class="t dis" style="top:253px;font-size:12px;line-height:12px;color:#848284;left:912.00px;letter-spacing:0.367px;">р/к</span>
<span id="t51" class="t dis" style="top:253px;font-size:12px;line-height:12px;color:#848284;left:950.30px;letter-spacing:0.051px;">тариф</span>
<div class="b1" style="left:1007px;top:250px;width:18px;height:18px;"></div>
<span id="t52" class="t dis" style="top:255px;font-size:12px;line-height:12px;color:#848284;left:1010.50px;letter-spacing:0.292px;">...</span>
<div class="f" style="left:31px;top:268px;width:80px;height:19px;background:#e0e0e0;"></div>
<div class="f" style="left:111px;top:268px;width:256px;height:19px;background:#ffffff;"></div>
<div class="f" style="left:385px;top:268px;width:79px;height:19px;background:#ffffff;"></div>
<div class="f" style="left:464px;top:268px;width:79px;height:19px;background:#ffffff;"></div>
<div class="f" style="left:543px;top:268px;width:80px;height:19px;background:#ffffff;"></div>
<div class="f" style="left:623px;top:268px;width:122px;height:19px;background:#ffffff;"></div>
<div class="f" style="left:764px;top:268px;width:107px;height:19px;background:#ffffff;"></div>
<div class="b" style="left:367px;top:268px;width:18px;height:19px;"><svg width="17" height="16" viewBox="0 0 17 16" style="position:absolute;left:0px;top:0px"><g shape-rendering="crispEdges"><path d="M2 5h11v4h-6l-5 4z" fill="#f1f0ee"/><path d="M3 13l3.5-4h7.5l-3 4z" fill="#e9e962"/><path d="M11 1h1v1h-1zM15 1h1v1h-1zM15 3h1v1h-1zM14 4h1v1h-1zM12 4h1v1h-1zM14 10h1v1h-1zM13 11h1v1h-1zM12 12h1v1h-1zM3 13h1v1h-1zM5 13h1v1h-1zM7 13h1v1h-1zM9 13h1v1h-1zM11 13h1v1h-1z" fill="#000"/><path d="M10 4h1v1h-1zM8 4h1v1h-1zM6 4h1v1h-1zM5 3h1v1h-1zM3 3h1v1h-1zM1 5h1v1h-1zM1 7h1v1h-1zM1 9h1v1h-1zM1 11h1v1h-1zM12 6h1v1h-1z" fill="#8c8a8c"/><path d="M7 9h1v1h-1zM9 9h1v1h-1zM11 9h1v1h-1zM5 10h1v1h-1zM3 12h1v1h-1z" fill="#84822a"/></g></svg></div>
<div class="b" style="left:745px;top:268px;width:19px;height:19px;"><svg width="17" height="16" viewBox="0 0 17 16" style="position:absolute;left:0px;top:0px"><g shape-rendering="crispEdges"><path d="M2 5h11v4h-6l-5 4z" fill="#f1f0ee"/><path d="M3 13l3.5-4h7.5l-3 4z" fill="#e9e962"/><path d="M11 1h1v1h-1zM15 1h1v1h-1zM15 3h1v1h-1zM14 4h1v1h-1zM12 4h1v1h-1zM14 10h1v1h-1zM13 11h1v1h-1zM12 12h1v1h-1zM3 13h1v1h-1zM5 13h1v1h-1zM7 13h1v1h-1zM9 13h1v1h-1zM11 13h1v1h-1z" fill="#000"/><path d="M10 4h1v1h-1zM8 4h1v1h-1zM6 4h1v1h-1zM5 3h1v1h-1zM3 3h1v1h-1zM1 5h1v1h-1zM1 7h1v1h-1zM1 9h1v1h-1zM1 11h1v1h-1zM12 6h1v1h-1z" fill="#8c8a8c"/><path d="M7 9h1v1h-1zM9 9h1v1h-1zM11 9h1v1h-1zM5 10h1v1h-1zM3 12h1v1h-1z" fill="#84822a"/></g></svg></div>
<div class="b" style="left:871px;top:268px;width:18px;height:19px;"><svg width="17" height="16" viewBox="0 0 17 16" style="position:absolute;left:0px;top:0px"><g shape-rendering="crispEdges"><path d="M2 5h11v4h-6l-5 4z" fill="#f1f0ee"/><path d="M3 13l3.5-4h7.5l-3 4z" fill="#e9e962"/><path d="M11 1h1v1h-1zM15 1h1v1h-1zM15 3h1v1h-1zM14 4h1v1h-1zM12 4h1v1h-1zM14 10h1v1h-1zM13 11h1v1h-1zM12 12h1v1h-1zM3 13h1v1h-1zM5 13h1v1h-1zM7 13h1v1h-1zM9 13h1v1h-1zM11 13h1v1h-1z" fill="#000"/><path d="M10 4h1v1h-1zM8 4h1v1h-1zM6 4h1v1h-1zM5 3h1v1h-1zM3 3h1v1h-1zM1 5h1v1h-1zM1 7h1v1h-1zM1 9h1v1h-1zM1 11h1v1h-1zM12 6h1v1h-1z" fill="#8c8a8c"/><path d="M7 9h1v1h-1zM9 9h1v1h-1zM11 9h1v1h-1zM5 10h1v1h-1zM3 12h1v1h-1z" fill="#84822a"/></g></svg></div>
<div class="ck" style="left:893px;top:271px;width:13px;height:13px;"></div>
<div class="ck" style="left:932px;top:271px;width:13px;height:13px;"></div>
<div class="ck" style="left:989px;top:271px;width:13px;height:13px;"></div>
<span id="t53" class="t dis" style="top:271px;font-size:12px;line-height:12px;color:#848284;left:912.00px;letter-spacing:0.367px;">р/к</span>
<span id="t54" class="t dis" style="top:271px;font-size:12px;line-height:12px;color:#848284;left:950.30px;letter-spacing:0.051px;">тариф</span>
<div class="b1" style="left:1007px;top:268px;width:18px;height:19px;"></div>
<span id="t55" class="t dis" style="top:273px;font-size:12px;line-height:12px;color:#848284;left:1010.50px;letter-spacing:0.292px;">...</span>
<div class="f" style="left:31px;top:287px;width:80px;height:19px;background:#e0e0e0;"></div>
<div class="f" style="left:111px;top:287px;width:256px;height:19px;background:#ffffff;"></div>
<div class="f" style="left:385px;top:287px;width:79px;height:19px;background:#ffffff;"></div>
<div class="f" style="left:464px;top:287px;width:79px;height:19px;background:#ffffff;"></div>
<div class="f" style="left:543px;top:287px;width:80px;height:19px;background:#ffffff;"></div>
<div class="f" style="left:623px;top:287px;width:122px;height:19px;background:#ffffff;"></div>
<div class="f" style="left:764px;top:287px;width:107px;height:19px;background:#ffffff;"></div>
<div class="b" style="left:367px;top:287px;width:18px;height:19px;"><svg width="17" height="16" viewBox="0 0 17 16" style="position:absolute;left:0px;top:-1px"><defs><pattern id="dl" width="2" height="2" patternUnits="userSpaceOnUse"><rect width="2" height="2" fill="#f1f0ee"/><rect width="1" height="1" fill="#8c8a4a"/><rect x="1" y="1" width="1" height="1" fill="#8c8a4a"/></pattern></defs><g shape-rendering="crispEdges"><path d="M2 5h10v5h-5l-5 4z" fill="#eded58"/><path d="M7 10h7l-3 4h-8z" fill="url(#dl)"/><path d="M10 2h1v1h-1zM12 2h1v1h-1zM9 3h1v1h-1zM13 3h1v1h-1zM15 3h1v1h-1zM14 4h1v1h-1zM13 5h1v1h-1zM15 5h1v1h-1zM2 14h1v1h-1zM4 14h1v1h-1zM6 14h1v1h-1zM8 14h1v1h-1zM10 14h1v1h-1z" fill="#000"/><path d="M2 4h1v1h-1zM4 4h1v1h-1zM1 5h1v1h-1zM1 7h1v1h-1zM1 9h1v1h-1zM1 11h1v1h-1zM1 13h1v1h-1zM7 5h1v1h-1zM9 5h1v1h-1zM11 5h1v1h-1zM12 6h1v1h-1zM12 8h1v1h-1z" fill="#84822a"/></g></svg></div>
<div class="b" style="left:745px;top:287px;width:19px;height:19px;"><svg width="17" height="16" viewBox="0 0 17 16" style="position:absolute;left:0px;top:-1px"><defs><pattern id="dl" width="2" height="2" patternUnits="userSpaceOnUse"><rect width="2" height="2" fill="#f1f0ee"/><rect width="1" height="1" fill="#8c8a4a"/><rect x="1" y="1" width="1" height="1" fill="#8c8a4a"/></pattern></defs><g shape-rendering="crispEdges"><path d="M2 5h10v5h-5l-5 4z" fill="#eded58"/><path d="M7 10h7l-3 4h-8z" fill="url(#dl)"/><path d="M10 2h1v1h-1zM12 2h1v1h-1zM9 3h1v1h-1zM13 3h1v1h-1zM15 3h1v1h-1zM14 4h1v1h-1zM13 5h1v1h-1zM15 5h1v1h-1zM2 14h1v1h-1zM4 14h1v1h-1zM6 14h1v1h-1zM8 14h1v1h-1zM10 14h1v1h-1z" fill="#000"/><path d="M2 4h1v1h-1zM4 4h1v1h-1zM1 5h1v1h-1zM1 7h1v1h-1zM1 9h1v1h-1zM1 11h1v1h-1zM1 13h1v1h-1zM7 5h1v1h-1zM9 5h1v1h-1zM11 5h1v1h-1zM12 6h1v1h-1zM12 8h1v1h-1z" fill="#84822a"/></g></svg></div>
<div class="b" style="left:871px;top:287px;width:18px;height:19px;"><svg width="17" height="16" viewBox="0 0 17 16" style="position:absolute;left:0px;top:-1px"><defs><pattern id="dl" width="2" height="2" patternUnits="userSpaceOnUse"><rect width="2" height="2" fill="#f1f0ee"/><rect width="1" height="1" fill="#8c8a4a"/><rect x="1" y="1" width="1" height="1" fill="#8c8a4a"/></pattern></defs><g shape-rendering="crispEdges"><path d="M2 5h10v5h-5l-5 4z" fill="#eded58"/><path d="M7 10h7l-3 4h-8z" fill="url(#dl)"/><path d="M10 2h1v1h-1zM12 2h1v1h-1zM9 3h1v1h-1zM13 3h1v1h-1zM15 3h1v1h-1zM14 4h1v1h-1zM13 5h1v1h-1zM15 5h1v1h-1zM2 14h1v1h-1zM4 14h1v1h-1zM6 14h1v1h-1zM8 14h1v1h-1zM10 14h1v1h-1z" fill="#000"/><path d="M2 4h1v1h-1zM4 4h1v1h-1zM1 5h1v1h-1zM1 7h1v1h-1zM1 9h1v1h-1zM1 11h1v1h-1zM1 13h1v1h-1zM7 5h1v1h-1zM9 5h1v1h-1zM11 5h1v1h-1zM12 6h1v1h-1zM12 8h1v1h-1z" fill="#84822a"/></g></svg></div>
<div class="ck" style="left:893px;top:290px;width:13px;height:13px;"></div>
<div class="ck" style="left:932px;top:290px;width:13px;height:13px;"></div>
<div class="ck" style="left:989px;top:290px;width:13px;height:13px;"></div>
<span id="t56" class="t dis" style="top:290px;font-size:12px;line-height:12px;color:#848284;left:912.00px;letter-spacing:0.367px;">р/к</span>
<span id="t57" class="t dis" style="top:290px;font-size:12px;line-height:12px;color:#848284;left:950.30px;letter-spacing:0.051px;">тариф</span>
<div class="b1" style="left:1007px;top:287px;width:18px;height:19px;"></div>
<span id="t58" class="t dis" style="top:292px;font-size:12px;line-height:12px;color:#848284;left:1010.50px;letter-spacing:0.292px;">...</span>
<div class="f" style="left:31px;top:306px;width:80px;height:18px;background:#e0e0e0;"></div>
<div class="f" style="left:111px;top:306px;width:256px;height:18px;background:#ffffff;"></div>
<div class="f" style="left:385px;top:306px;width:79px;height:18px;background:#ffffff;"></div>
<div class="f" style="left:464px;top:306px;width:79px;height:18px;background:#ffffff;"></div>
<div class="f" style="left:543px;top:306px;width:80px;height:18px;background:#ffffff;"></div>
<div class="f" style="left:623px;top:306px;width:122px;height:18px;background:#ffffff;"></div>
<div class="f" style="left:764px;top:306px;width:107px;height:18px;background:#ffffff;"></div>
<div class="b" style="left:367px;top:306px;width:18px;height:18px;"><svg width="17" height="16" viewBox="0 0 17 16" style="position:absolute;left:0px;top:0px"><g shape-rendering="crispEdges"><path d="M2 5h11v4h-6l-5 4z" fill="#f1f0ee"/><path d="M3 13l3.5-4h7.5l-3 4z" fill="#e9e962"/><path d="M11 1h1v1h-1zM15 1h1v1h-1zM15 3h1v1h-1zM14 4h1v1h-1zM12 4h1v1h-1zM14 10h1v1h-1zM13 11h1v1h-1zM12 12h1v1h-1zM3 13h1v1h-1zM5 13h1v1h-1zM7 13h1v1h-1zM9 13h1v1h-1zM11 13h1v1h-1z" fill="#000"/><path d="M10 4h1v1h-1zM8 4h1v1h-1zM6 4h1v1h-1zM5 3h1v1h-1zM3 3h1v1h-1zM1 5h1v1h-1zM1 7h1v1h-1zM1 9h1v1h-1zM1 11h1v1h-1zM12 6h1v1h-1z" fill="#8c8a8c"/><path d="M7 9h1v1h-1zM9 9h1v1h-1zM11 9h1v1h-1zM5 10h1v1h-1zM3 12h1v1h-1z" fill="#84822a"/></g></svg></div>
<div class="b" style="left:745px;top:306px;width:19px;height:18px;"><svg width="17" height="16" viewBox="0 0 17 16" style="position:absolute;left:0px;top:0px"><g shape-rendering="crispEdges"><path d="M2 5h11v4h-6l-5 4z" fill="#f1f0ee"/><path d="M3 13l3.5-4h7.5l-3 4z" fill="#e9e962"/><path d="M11 1h1v1h-1zM15 1h1v1h-1zM15 3h1v1h-1zM14 4h1v1h-1zM12 4h1v1h-1zM14 10h1v1h-1zM13 11h1v1h-1zM12 12h1v1h-1zM3 13h1v1h-1zM5 13h1v1h-1zM7 13h1v1h-1zM9 13h1v1h-1zM11 13h1v1h-1z" fill="#000"/><path d="M10 4h1v1h-1zM8 4h1v1h-1zM6 4h1v1h-1zM5 3h1v1h-1zM3 3h1v1h-1zM1 5h1v1h-1zM1 7h1v1h-1zM1 9h1v1h-1zM1 11h1v1h-1zM12 6h1v1h-1z" fill="#8c8a8c"/><path d="M7 9h1v1h-1zM9 9h1v1h-1zM11 9h1v1h-1zM5 10h1v1h-1zM3 12h1v1h-1z" fill="#84822a"/></g></svg></div>
<div class="b" style="left:871px;top:306px;width:18px;height:18px;"><svg width="17" height="16" viewBox="0 0 17 16" style="position:absolute;left:0px;top:0px"><g shape-rendering="crispEdges"><path d="M2 5h11v4h-6l-5 4z" fill="#f1f0ee"/><path d="M3 13l3.5-4h7.5l-3 4z" fill="#e9e962"/><path d="M11 1h1v1h-1zM15 1h1v1h-1zM15 3h1v1h-1zM14 4h1v1h-1zM12 4h1v1h-1zM14 10h1v1h-1zM13 11h1v1h-1zM12 12h1v1h-1zM3 13h1v1h-1zM5 13h1v1h-1zM7 13h1v1h-1zM9 13h1v1h-1zM11 13h1v1h-1z" fill="#000"/><path d="M10 4h1v1h-1zM8 4h1v1h-1zM6 4h1v1h-1zM5 3h1v1h-1zM3 3h1v1h-1zM1 5h1v1h-1zM1 7h1v1h-1zM1 9h1v1h-1zM1 11h1v1h-1zM12 6h1v1h-1z" fill="#8c8a8c"/><path d="M7 9h1v1h-1zM9 9h1v1h-1zM11 9h1v1h-1zM5 10h1v1h-1zM3 12h1v1h-1z" fill="#84822a"/></g></svg></div>
<div class="ck" style="left:893px;top:309px;width:13px;height:13px;"></div>
<div class="ck" style="left:932px;top:309px;width:13px;height:13px;"></div>
<div class="ck" style="left:989px;top:309px;width:13px;height:13px;"></div>
<span id="t59" class="t dis" style="top:309px;font-size:12px;line-height:12px;color:#848284;left:912.00px;letter-spacing:0.367px;">р/к</span>
<span id="t60" class="t dis" style="top:309px;font-size:12px;line-height:12px;color:#848284;left:950.30px;letter-spacing:0.051px;">тариф</span>
<div class="b1" style="left:1007px;top:306px;width:18px;height:18px;"></div>
<span id="t61" class="t dis" style="top:311px;font-size:12px;line-height:12px;color:#848284;left:1010.50px;letter-spacing:0.292px;">...</span>
<div class="f" style="left:31px;top:324px;width:80px;height:19px;background:#e0e0e0;"></div>
<div class="f" style="left:111px;top:324px;width:256px;height:19px;background:#ffffff;"></div>
<div class="f" style="left:385px;top:324px;width:79px;height:19px;background:#ffffff;"></div>
<div class="f" style="left:464px;top:324px;width:79px;height:19px;background:#ffffff;"></div>
<div class="f" style="left:543px;top:324px;width:80px;height:19px;background:#ffffff;"></div>
<div class="f" style="left:623px;top:324px;width:122px;height:19px;background:#ffffff;"></div>
<div class="f" style="left:764px;top:324px;width:107px;height:19px;background:#ffffff;"></div>
<div class="b" style="left:367px;top:324px;width:18px;height:19px;"><svg width="17" height="16" viewBox="0 0 17 16" style="position:absolute;left:0px;top:0px"><g shape-rendering="crispEdges"><path d="M2 5h11v4h-6l-5 4z" fill="#f1f0ee"/><path d="M3 13l3.5-4h7.5l-3 4z" fill="#e9e962"/><path d="M11 1h1v1h-1zM15 1h1v1h-1zM15 3h1v1h-1zM14 4h1v1h-1zM12 4h1v1h-1zM14 10h1v1h-1zM13 11h1v1h-1zM12 12h1v1h-1zM3 13h1v1h-1zM5 13h1v1h-1zM7 13h1v1h-1zM9 13h1v1h-1zM11 13h1v1h-1z" fill="#000"/><path d="M10 4h1v1h-1zM8 4h1v1h-1zM6 4h1v1h-1zM5 3h1v1h-1zM3 3h1v1h-1zM1 5h1v1h-1zM1 7h1v1h-1zM1 9h1v1h-1zM1 11h1v1h-1zM12 6h1v1h-1z" fill="#8c8a8c"/><path d="M7 9h1v1h-1zM9 9h1v1h-1zM11 9h1v1h-1zM5 10h1v1h-1zM3 12h1v1h-1z" fill="#84822a"/></g></svg></div>
<div class="b" style="left:745px;top:324px;width:19px;height:19px;"><svg width="17" height="16" viewBox="0 0 17 16" style="position:absolute;left:0px;top:0px"><g shape-rendering="crispEdges"><path d="M2 5h11v4h-6l-5 4z" fill="#f1f0ee"/><path d="M3 13l3.5-4h7.5l-3 4z" fill="#e9e962"/><path d="M11 1h1v1h-1zM15 1h1v1h-1zM15 3h1v1h-1zM14 4h1v1h-1zM12 4h1v1h-1zM14 10h1v1h-1zM13 11h1v1h-1zM12 12h1v1h-1zM3 13h1v1h-1zM5 13h1v1h-1zM7 13h1v1h-1zM9 13h1v1h-1zM11 13h1v1h-1z" fill="#000"/><path d="M10 4h1v1h-1zM8 4h1v1h-1zM6 4h1v1h-1zM5 3h1v1h-1zM3 3h1v1h-1zM1 5h1v1h-1zM1 7h1v1h-1zM1 9h1v1h-1zM1 11h1v1h-1zM12 6h1v1h-1z" fill="#8c8a8c"/><path d="M7 9h1v1h-1zM9 9h1v1h-1zM11 9h1v1h-1zM5 10h1v1h-1zM3 12h1v1h-1z" fill="#84822a"/></g></svg></div>
<div class="b" style="left:871px;top:324px;width:18px;height:19px;"><svg width="17" height="16" viewBox="0 0 17 16" style="position:absolute;left:0px;top:0px"><g shape-rendering="crispEdges"><path d="M2 5h11v4h-6l-5 4z" fill="#f1f0ee"/><path d="M3 13l3.5-4h7.5l-3 4z" fill="#e9e962"/><path d="M11 1h1v1h-1zM15 1h1v1h-1zM15 3h1v1h-1zM14 4h1v1h-1zM12 4h1v1h-1zM14 10h1v1h-1zM13 11h1v1h-1zM12 12h1v1h-1zM3 13h1v1h-1zM5 13h1v1h-1zM7 13h1v1h-1zM9 13h1v1h-1zM11 13h1v1h-1z" fill="#000"/><path d="M10 4h1v1h-1zM8 4h1v1h-1zM6 4h1v1h-1zM5 3h1v1h-1zM3 3h1v1h-1zM1 5h1v1h-1zM1 7h1v1h-1zM1 9h1v1h-1zM1 11h1v1h-1zM12 6h1v1h-1z" fill="#8c8a8c"/><path d="M7 9h1v1h-1zM9 9h1v1h-1zM11 9h1v1h-1zM5 10h1v1h-1zM3 12h1v1h-1z" fill="#84822a"/></g></svg></div>
<div class="ck" style="left:893px;top:327px;width:13px;height:13px;"></div>
<div class="ck" style="left:932px;top:327px;width:13px;height:13px;"></div>
<div class="ck" style="left:989px;top:327px;width:13px;height:13px;"></div>
<span id="t62" class="t dis" style="top:327px;font-size:12px;line-height:12px;color:#848284;left:912.00px;letter-spacing:0.367px;">р/к</span>
<span id="t63" class="t dis" style="top:327px;font-size:12px;line-height:12px;color:#848284;left:950.30px;letter-spacing:0.051px;">тариф</span>
<div class="b1" style="left:1007px;top:324px;width:18px;height:19px;"></div>
<span id="t64" class="t dis" style="top:329px;font-size:12px;line-height:12px;color:#848284;left:1010.50px;letter-spacing:0.292px;">...</span>
<div class="f" style="left:31px;top:343px;width:80px;height:19px;background:#e0e0e0;"></div>
<div class="f" style="left:111px;top:343px;width:256px;height:19px;background:#ffffff;"></div>
<div class="f" style="left:385px;top:343px;width:79px;height:19px;background:#ffffff;"></div>
<div class="f" style="left:464px;top:343px;width:79px;height:19px;background:#ffffff;"></div>
<div class="f" style="left:543px;top:343px;width:80px;height:19px;background:#ffffff;"></div>
<div class="f" style="left:623px;top:343px;width:122px;height:19px;background:#ffffff;"></div>
<div class="f" style="left:764px;top:343px;width:107px;height:19px;background:#ffffff;"></div>
<div class="b" style="left:367px;top:343px;width:18px;height:19px;"><svg width="17" height="16" viewBox="0 0 17 16" style="position:absolute;left:0px;top:-1px"><defs><pattern id="dl" width="2" height="2" patternUnits="userSpaceOnUse"><rect width="2" height="2" fill="#f1f0ee"/><rect width="1" height="1" fill="#8c8a4a"/><rect x="1" y="1" width="1" height="1" fill="#8c8a4a"/></pattern></defs><g shape-rendering="crispEdges"><path d="M2 5h10v5h-5l-5 4z" fill="#eded58"/><path d="M7 10h7l-3 4h-8z" fill="url(#dl)"/><path d="M10 2h1v1h-1zM12 2h1v1h-1zM9 3h1v1h-1zM13 3h1v1h-1zM15 3h1v1h-1zM14 4h1v1h-1zM13 5h1v1h-1zM15 5h1v1h-1zM2 14h1v1h-1zM4 14h1v1h-1zM6 14h1v1h-1zM8 14h1v1h-1zM10 14h1v1h-1z" fill="#000"/><path d="M2 4h1v1h-1zM4 4h1v1h-1zM1 5h1v1h-1zM1 7h1v1h-1zM1 9h1v1h-1zM1 11h1v1h-1zM1 13h1v1h-1zM7 5h1v1h-1zM9 5h1v1h-1zM11 5h1v1h-1zM12 6h1v1h-1zM12 8h1v1h-1z" fill="#84822a"/></g></svg></div>
<div class="b" style="left:745px;top:343px;width:19px;height:19px;"><svg width="17" height="16" viewBox="0 0 17 16" style="position:absolute;left:0px;top:-1px"><defs><pattern id="dl" width="2" height="2" patternUnits="userSpaceOnUse"><rect width="2" height="2" fill="#f1f0ee"/><rect width="1" height="1" fill="#8c8a4a"/><rect x="1" y="1" width="1" height="1" fill="#8c8a4a"/></pattern></defs><g shape-rendering="crispEdges"><path d="M2 5h10v5h-5l-5 4z" fill="#eded58"/><path d="M7 10h7l-3 4h-8z" fill="url(#dl)"/><path d="M10 2h1v1h-1zM12 2h1v1h-1zM9 3h1v1h-1zM13 3h1v1h-1zM15 3h1v1h-1zM14 4h1v1h-1zM13 5h1v1h-1zM15 5h1v1h-1zM2 14h1v1h-1zM4 14h1v1h-1zM6 14h1v1h-1zM8 14h1v1h-1zM10 14h1v1h-1z" fill="#000"/><path d="M2 4h1v1h-1zM4 4h1v1h-1zM1 5h1v1h-1zM1 7h1v1h-1zM1 9h1v1h-1zM1 11h1v1h-1zM1 13h1v1h-1zM7 5h1v1h-1zM9 5h1v1h-1zM11 5h1v1h-1zM12 6h1v1h-1zM12 8h1v1h-1z" fill="#84822a"/></g></svg></div>
<div class="b" style="left:871px;top:343px;width:18px;height:19px;"><svg width="17" height="16" viewBox="0 0 17 16" style="position:absolute;left:0px;top:-1px"><defs><pattern id="dl" width="2" height="2" patternUnits="userSpaceOnUse"><rect width="2" height="2" fill="#f1f0ee"/><rect width="1" height="1" fill="#8c8a4a"/><rect x="1" y="1" width="1" height="1" fill="#8c8a4a"/></pattern></defs><g shape-rendering="crispEdges"><path d="M2 5h10v5h-5l-5 4z" fill="#eded58"/><path d="M7 10h7l-3 4h-8z" fill="url(#dl)"/><path d="M10 2h1v1h-1zM12 2h1v1h-1zM9 3h1v1h-1zM13 3h1v1h-1zM15 3h1v1h-1zM14 4h1v1h-1zM13 5h1v1h-1zM15 5h1v1h-1zM2 14h1v1h-1zM4 14h1v1h-1zM6 14h1v1h-1zM8 14h1v1h-1zM10 14h1v1h-1z" fill="#000"/><path d="M2 4h1v1h-1zM4 4h1v1h-1zM1 5h1v1h-1zM1 7h1v1h-1zM1 9h1v1h-1zM1 11h1v1h-1zM1 13h1v1h-1zM7 5h1v1h-1zM9 5h1v1h-1zM11 5h1v1h-1zM12 6h1v1h-1zM12 8h1v1h-1z" fill="#84822a"/></g></svg></div>
<div class="ck" style="left:893px;top:346px;width:13px;height:13px;"></div>
<div class="ck" style="left:932px;top:346px;width:13px;height:13px;"></div>
<div class="ck" style="left:989px;top:346px;width:13px;height:13px;"></div>
<span id="t65" class="t dis" style="top:346px;font-size:12px;line-height:12px;color:#848284;left:912.00px;letter-spacing:0.367px;">р/к</span>
<span id="t66" class="t dis" style="top:346px;font-size:12px;line-height:12px;color:#848284;left:950.30px;letter-spacing:0.051px;">тариф</span>
<div class="b1" style="left:1007px;top:343px;width:18px;height:19px;"></div>
<span id="t67" class="t dis" style="top:348px;font-size:12px;line-height:12px;color:#848284;left:1010.50px;letter-spacing:0.292px;">...</span>
<div class="f" style="left:31px;top:362px;width:80px;height:18px;background:#e0e0e0;"></div>
<div class="f" style="left:111px;top:362px;width:256px;height:18px;background:#ffffff;"></div>
<div class="f" style="left:385px;top:362px;width:79px;height:18px;background:#ffffff;"></div>
<div class="f" style="left:464px;top:362px;width:79px;height:18px;background:#ffffff;"></div>
<div class="f" style="left:543px;top:362px;width:80px;height:18px;background:#ffffff;"></div>
<div class="f" style="left:623px;top:362px;width:122px;height:18px;background:#ffffff;"></div>
<div class="f" style="left:764px;top:362px;width:107px;height:18px;background:#ffffff;"></div>
<div class="b" style="left:367px;top:362px;width:18px;height:18px;"><svg width="17" height="16" viewBox="0 0 17 16" style="position:absolute;left:0px;top:0px"><g shape-rendering="crispEdges"><path d="M2 5h11v4h-6l-5 4z" fill="#f1f0ee"/><path d="M3 13l3.5-4h7.5l-3 4z" fill="#e9e962"/><path d="M11 1h1v1h-1zM15 1h1v1h-1zM15 3h1v1h-1zM14 4h1v1h-1zM12 4h1v1h-1zM14 10h1v1h-1zM13 11h1v1h-1zM12 12h1v1h-1zM3 13h1v1h-1zM5 13h1v1h-1zM7 13h1v1h-1zM9 13h1v1h-1zM11 13h1v1h-1z" fill="#000"/><path d="M10 4h1v1h-1zM8 4h1v1h-1zM6 4h1v1h-1zM5 3h1v1h-1zM3 3h1v1h-1zM1 5h1v1h-1zM1 7h1v1h-1zM1 9h1v1h-1zM1 11h1v1h-1zM12 6h1v1h-1z" fill="#8c8a8c"/><path d="M7 9h1v1h-1zM9 9h1v1h-1zM11 9h1v1h-1zM5 10h1v1h-1zM3 12h1v1h-1z" fill="#84822a"/></g></svg></div>
<div class="b" style="left:745px;top:362px;width:19px;height:18px;"><svg width="17" height="16" viewBox="0 0 17 16" style="position:absolute;left:0px;top:0px"><g shape-rendering="crispEdges"><path d="M2 5h11v4h-6l-5 4z" fill="#f1f0ee"/><path d="M3 13l3.5-4h7.5l-3 4z" fill="#e9e962"/><path d="M11 1h1v1h-1zM15 1h1v1h-1zM15 3h1v1h-1zM14 4h1v1h-1zM12 4h1v1h-1zM14 10h1v1h-1zM13 11h1v1h-1zM12 12h1v1h-1zM3 13h1v1h-1zM5 13h1v1h-1zM7 13h1v1h-1zM9 13h1v1h-1zM11 13h1v1h-1z" fill="#000"/><path d="M10 4h1v1h-1zM8 4h1v1h-1zM6 4h1v1h-1zM5 3h1v1h-1zM3 3h1v1h-1zM1 5h1v1h-1zM1 7h1v1h-1zM1 9h1v1h-1zM1 11h1v1h-1zM12 6h1v1h-1z" fill="#8c8a8c"/><path d="M7 9h1v1h-1zM9 9h1v1h-1zM11 9h1v1h-1zM5 10h1v1h-1zM3 12h1v1h-1z" fill="#84822a"/></g></svg></div>
<div class="b" style="left:871px;top:362px;width:18px;height:18px;"><svg width="17" height="16" viewBox="0 0 17 16" style="position:absolute;left:0px;top:0px"><g shape-rendering="crispEdges"><path d="M2 5h11v4h-6l-5 4z" fill="#f1f0ee"/><path d="M3 13l3.5-4h7.5l-3 4z" fill="#e9e962"/><path d="M11 1h1v1h-1zM15 1h1v1h-1zM15 3h1v1h-1zM14 4h1v1h-1zM12 4h1v1h-1zM14 10h1v1h-1zM13 11h1v1h-1zM12 12h1v1h-1zM3 13h1v1h-1zM5 13h1v1h-1zM7 13h1v1h-1zM9 13h1v1h-1zM11 13h1v1h-1z" fill="#000"/><path d="M10 4h1v1h-1zM8 4h1v1h-1zM6 4h1v1h-1zM5 3h1v1h-1zM3 3h1v1h-1zM1 5h1v1h-1zM1 7h1v1h-1zM1 9h1v1h-1zM1 11h1v1h-1zM12 6h1v1h-1z" fill="#8c8a8c"/><path d="M7 9h1v1h-1zM9 9h1v1h-1zM11 9h1v1h-1zM5 10h1v1h-1zM3 12h1v1h-1z" fill="#84822a"/></g></svg></div>
<div class="ck" style="left:893px;top:365px;width:13px;height:13px;"></div>
<div class="ck" style="left:932px;top:365px;width:13px;height:13px;"></div>
<div class="ck" style="left:989px;top:365px;width:13px;height:13px;"></div>
<span id="t68" class="t dis" style="top:365px;font-size:12px;line-height:12px;color:#848284;left:912.00px;letter-spacing:0.367px;">р/к</span>
<span id="t69" class="t dis" style="top:365px;font-size:12px;line-height:12px;color:#848284;left:950.30px;letter-spacing:0.051px;">тариф</span>
<div class="b1" style="left:1007px;top:362px;width:18px;height:18px;"></div>
<span id="t70" class="t dis" style="top:367px;font-size:12px;line-height:12px;color:#848284;left:1010.50px;letter-spacing:0.292px;">...</span>
<div class="f" style="left:31px;top:380px;width:80px;height:19px;background:#e0e0e0;"></div>
<div class="f" style="left:111px;top:380px;width:256px;height:19px;background:#ffffff;"></div>
<div class="f" style="left:385px;top:380px;width:79px;height:19px;background:#ffffff;"></div>
<div class="f" style="left:464px;top:380px;width:79px;height:19px;background:#ffffff;"></div>
<div class="f" style="left:543px;top:380px;width:80px;height:19px;background:#ffffff;"></div>
<div class="f" style="left:623px;top:380px;width:122px;height:19px;background:#ffffff;"></div>
<div class="f" style="left:764px;top:380px;width:107px;height:19px;background:#ffffff;"></div>
<div class="b" style="left:367px;top:380px;width:18px;height:19px;"><svg width="17" height="16" viewBox="0 0 17 16" style="position:absolute;left:0px;top:0px"><g shape-rendering="crispEdges"><path d="M2 5h11v4h-6l-5 4z" fill="#f1f0ee"/><path d="M3 13l3.5-4h7.5l-3 4z" fill="#e9e962"/><path d="M11 1h1v1h-1zM15 1h1v1h-1zM15 3h1v1h-1zM14 4h1v1h-1zM12 4h1v1h-1zM14 10h1v1h-1zM13 11h1v1h-1zM12 12h1v1h-1zM3 13h1v1h-1zM5 13h1v1h-1zM7 13h1v1h-1zM9 13h1v1h-1zM11 13h1v1h-1z" fill="#000"/><path d="M10 4h1v1h-1zM8 4h1v1h-1zM6 4h1v1h-1zM5 3h1v1h-1zM3 3h1v1h-1zM1 5h1v1h-1zM1 7h1v1h-1zM1 9h1v1h-1zM1 11h1v1h-1zM12 6h1v1h-1z" fill="#8c8a8c"/><path d="M7 9h1v1h-1zM9 9h1v1h-1zM11 9h1v1h-1zM5 10h1v1h-1zM3 12h1v1h-1z" fill="#84822a"/></g></svg></div>
<div class="b" style="left:745px;top:380px;width:19px;height:19px;"><svg width="17" height="16" viewBox="0 0 17 16" style="position:absolute;left:0px;top:0px"><g shape-rendering="crispEdges"><path d="M2 5h11v4h-6l-5 4z" fill="#f1f0ee"/><path d="M3 13l3.5-4h7.5l-3 4z" fill="#e9e962"/><path d="M11 1h1v1h-1zM15 1h1v1h-1zM15 3h1v1h-1zM14 4h1v1h-1zM12 4h1v1h-1zM14 10h1v1h-1zM13 11h1v1h-1zM12 12h1v1h-1zM3 13h1v1h-1zM5 13h1v1h-1zM7 13h1v1h-1zM9 13h1v1h-1zM11 13h1v1h-1z" fill="#000"/><path d="M10 4h1v1h-1zM8 4h1v1h-1zM6 4h1v1h-1zM5 3h1v1h-1zM3 3h1v1h-1zM1 5h1v1h-1zM1 7h1v1h-1zM1 9h1v1h-1zM1 11h1v1h-1zM12 6h1v1h-1z" fill="#8c8a8c"/><path d="M7 9h1v1h-1zM9 9h1v1h-1zM11 9h1v1h-1zM5 10h1v1h-1zM3 12h1v1h-1z" fill="#84822a"/></g></svg></div>
<div class="b" style="left:871px;top:380px;width:18px;height:19px;"><svg width="17" height="16" viewBox="0 0 17 16" style="position:absolute;left:0px;top:0px"><g shape-rendering="crispEdges"><path d="M2 5h11v4h-6l-5 4z" fill="#f1f0ee"/><path d="M3 13l3.5-4h7.5l-3 4z" fill="#e9e962"/><path d="M11 1h1v1h-1zM15 1h1v1h-1zM15 3h1v1h-1zM14 4h1v1h-1zM12 4h1v1h-1zM14 10h1v1h-1zM13 11h1v1h-1zM12 12h1v1h-1zM3 13h1v1h-1zM5 13h1v1h-1zM7 13h1v1h-1zM9 13h1v1h-1zM11 13h1v1h-1z" fill="#000"/><path d="M10 4h1v1h-1zM8 4h1v1h-1zM6 4h1v1h-1zM5 3h1v1h-1zM3 3h1v1h-1zM1 5h1v1h-1zM1 7h1v1h-1zM1 9h1v1h-1zM1 11h1v1h-1zM12 6h1v1h-1z" fill="#8c8a8c"/><path d="M7 9h1v1h-1zM9 9h1v1h-1zM11 9h1v1h-1zM5 10h1v1h-1zM3 12h1v1h-1z" fill="#84822a"/></g></svg></div>
<div class="ck" style="left:893px;top:383px;width:13px;height:13px;"></div>
<div class="ck" style="left:932px;top:383px;width:13px;height:13px;"></div>
<div class="ck" style="left:989px;top:383px;width:13px;height:13px;"></div>
<span id="t71" class="t dis" style="top:383px;font-size:12px;line-height:12px;color:#848284;left:912.00px;letter-spacing:0.367px;">р/к</span>
<span id="t72" class="t dis" style="top:383px;font-size:12px;line-height:12px;color:#848284;left:950.30px;letter-spacing:0.051px;">тариф</span>
<div class="b1" style="left:1007px;top:380px;width:18px;height:19px;"></div>
<span id="t73" class="t dis" style="top:385px;font-size:12px;line-height:12px;color:#848284;left:1010.50px;letter-spacing:0.292px;">...</span>
<div class="f" style="left:31px;top:399px;width:80px;height:19px;background:#e0e0e0;"></div>
<div class="f" style="left:111px;top:399px;width:256px;height:19px;background:#ffffff;"></div>
<div class="f" style="left:385px;top:399px;width:79px;height:19px;background:#ffffff;"></div>
<div class="f" style="left:464px;top:399px;width:79px;height:19px;background:#ffffff;"></div>
<div class="f" style="left:543px;top:399px;width:80px;height:19px;background:#ffffff;"></div>
<div class="f" style="left:623px;top:399px;width:122px;height:19px;background:#ffffff;"></div>
<div class="f" style="left:764px;top:399px;width:107px;height:19px;background:#ffffff;"></div>
<div class="b" style="left:367px;top:399px;width:18px;height:19px;"><svg width="17" height="16" viewBox="0 0 17 16" style="position:absolute;left:0px;top:-1px"><defs><pattern id="dl" width="2" height="2" patternUnits="userSpaceOnUse"><rect width="2" height="2" fill="#f1f0ee"/><rect width="1" height="1" fill="#8c8a4a"/><rect x="1" y="1" width="1" height="1" fill="#8c8a4a"/></pattern></defs><g shape-rendering="crispEdges"><path d="M2 5h10v5h-5l-5 4z" fill="#eded58"/><path d="M7 10h7l-3 4h-8z" fill="url(#dl)"/><path d="M10 2h1v1h-1zM12 2h1v1h-1zM9 3h1v1h-1zM13 3h1v1h-1zM15 3h1v1h-1zM14 4h1v1h-1zM13 5h1v1h-1zM15 5h1v1h-1zM2 14h1v1h-1zM4 14h1v1h-1zM6 14h1v1h-1zM8 14h1v1h-1zM10 14h1v1h-1z" fill="#000"/><path d="M2 4h1v1h-1zM4 4h1v1h-1zM1 5h1v1h-1zM1 7h1v1h-1zM1 9h1v1h-1zM1 11h1v1h-1zM1 13h1v1h-1zM7 5h1v1h-1zM9 5h1v1h-1zM11 5h1v1h-1zM12 6h1v1h-1zM12 8h1v1h-1z" fill="#84822a"/></g></svg></div>
<div class="b" style="left:745px;top:399px;width:19px;height:19px;"><svg width="17" height="16" viewBox="0 0 17 16" style="position:absolute;left:0px;top:-1px"><defs><pattern id="dl" width="2" height="2" patternUnits="userSpaceOnUse"><rect width="2" height="2" fill="#f1f0ee"/><rect width="1" height="1" fill="#8c8a4a"/><rect x="1" y="1" width="1" height="1" fill="#8c8a4a"/></pattern></defs><g shape-rendering="crispEdges"><path d="M2 5h10v5h-5l-5 4z" fill="#eded58"/><path d="M7 10h7l-3 4h-8z" fill="url(#dl)"/><path d="M10 2h1v1h-1zM12 2h1v1h-1zM9 3h1v1h-1zM13 3h1v1h-1zM15 3h1v1h-1zM14 4h1v1h-1zM13 5h1v1h-1zM15 5h1v1h-1zM2 14h1v1h-1zM4 14h1v1h-1zM6 14h1v1h-1zM8 14h1v1h-1zM10 14h1v1h-1z" fill="#000"/><path d="M2 4h1v1h-1zM4 4h1v1h-1zM1 5h1v1h-1zM1 7h1v1h-1zM1 9h1v1h-1zM1 11h1v1h-1zM1 13h1v1h-1zM7 5h1v1h-1zM9 5h1v1h-1zM11 5h1v1h-1zM12 6h1v1h-1zM12 8h1v1h-1z" fill="#84822a"/></g></svg></div>
<div class="b" style="left:871px;top:399px;width:18px;height:19px;"><svg width="17" height="16" viewBox="0 0 17 16" style="position:absolute;left:0px;top:-1px"><defs><pattern id="dl" width="2" height="2" patternUnits="userSpaceOnUse"><rect width="2" height="2" fill="#f1f0ee"/><rect width="1" height="1" fill="#8c8a4a"/><rect x="1" y="1" width="1" height="1" fill="#8c8a4a"/></pattern></defs><g shape-rendering="crispEdges"><path d="M2 5h10v5h-5l-5 4z" fill="#eded58"/><path d="M7 10h7l-3 4h-8z" fill="url(#dl)"/><path d="M10 2h1v1h-1zM12 2h1v1h-1zM9 3h1v1h-1zM13 3h1v1h-1zM15 3h1v1h-1zM14 4h1v1h-1zM13 5h1v1h-1zM15 5h1v1h-1zM2 14h1v1h-1zM4 14h1v1h-1zM6 14h1v1h-1zM8 14h1v1h-1zM10 14h1v1h-1z" fill="#000"/><path d="M2 4h1v1h-1zM4 4h1v1h-1zM1 5h1v1h-1zM1 7h1v1h-1zM1 9h1v1h-1zM1 11h1v1h-1zM1 13h1v1h-1zM7 5h1v1h-1zM9 5h1v1h-1zM11 5h1v1h-1zM12 6h1v1h-1zM12 8h1v1h-1z" fill="#84822a"/></g></svg></div>
<div class="ck" style="left:893px;top:402px;width:13px;height:13px;"></div>
<div class="ck" style="left:932px;top:402px;width:13px;height:13px;"></div>
<div class="ck" style="left:989px;top:402px;width:13px;height:13px;"></div>
<span id="t74" class="t dis" style="top:402px;font-size:12px;line-height:12px;color:#848284;left:912.00px;letter-spacing:0.367px;">р/к</span>
<span id="t75" class="t dis" style="top:402px;font-size:12px;line-height:12px;color:#848284;left:950.30px;letter-spacing:0.051px;">тариф</span>
<div class="b1" style="left:1007px;top:399px;width:18px;height:19px;"></div>
<span id="t76" class="t dis" style="top:404px;font-size:12px;line-height:12px;color:#848284;left:1010.50px;letter-spacing:0.292px;">...</span>
<div class="f" style="left:31px;top:418px;width:80px;height:19px;background:#e0e0e0;"></div>
<div class="f" style="left:111px;top:418px;width:256px;height:19px;background:#ffffff;"></div>
<div class="f" style="left:385px;top:418px;width:79px;height:19px;background:#ffffff;"></div>
<div class="f" style="left:464px;top:418px;width:79px;height:19px;background:#ffffff;"></div>
<div class="f" style="left:543px;top:418px;width:80px;height:19px;background:#ffffff;"></div>
<div class="f" style="left:623px;top:418px;width:122px;height:19px;background:#ffffff;"></div>
<div class="f" style="left:764px;top:418px;width:107px;height:19px;background:#ffffff;"></div>
<div class="b" style="left:367px;top:418px;width:18px;height:19px;"><svg width="17" height="16" viewBox="0 0 17 16" style="position:absolute;left:0px;top:0px"><g shape-rendering="crispEdges"><path d="M2 5h11v4h-6l-5 4z" fill="#f1f0ee"/><path d="M3 13l3.5-4h7.5l-3 4z" fill="#e9e962"/><path d="M11 1h1v1h-1zM15 1h1v1h-1zM15 3h1v1h-1zM14 4h1v1h-1zM12 4h1v1h-1zM14 10h1v1h-1zM13 11h1v1h-1zM12 12h1v1h-1zM3 13h1v1h-1zM5 13h1v1h-1zM7 13h1v1h-1zM9 13h1v1h-1zM11 13h1v1h-1z" fill="#000"/><path d="M10 4h1v1h-1zM8 4h1v1h-1zM6 4h1v1h-1zM5 3h1v1h-1zM3 3h1v1h-1zM1 5h1v1h-1zM1 7h1v1h-1zM1 9h1v1h-1zM1 11h1v1h-1zM12 6h1v1h-1z" fill="#8c8a8c"/><path d="M7 9h1v1h-1zM9 9h1v1h-1zM11 9h1v1h-1zM5 10h1v1h-1zM3 12h1v1h-1z" fill="#84822a"/></g></svg></div>
<div class="b" style="left:745px;top:418px;width:19px;height:19px;"><svg width="17" height="16" viewBox="0 0 17 16" style="position:absolute;left:0px;top:0px"><g shape-rendering="crispEdges"><path d="M2 5h11v4h-6l-5 4z" fill="#f1f0ee"/><path d="M3 13l3.5-4h7.5l-3 4z" fill="#e9e962"/><path d="M11 1h1v1h-1zM15 1h1v1h-1zM15 3h1v1h-1zM14 4h1v1h-1zM12 4h1v1h-1zM14 10h1v1h-1zM13 11h1v1h-1zM12 12h1v1h-1zM3 13h1v1h-1zM5 13h1v1h-1zM7 13h1v1h-1zM9 13h1v1h-1zM11 13h1v1h-1z" fill="#000"/><path d="M10 4h1v1h-1zM8 4h1v1h-1zM6 4h1v1h-1zM5 3h1v1h-1zM3 3h1v1h-1zM1 5h1v1h-1zM1 7h1v1h-1zM1 9h1v1h-1zM1 11h1v1h-1zM12 6h1v1h-1z" fill="#8c8a8c"/><path d="M7 9h1v1h-1zM9 9h1v1h-1zM11 9h1v1h-1zM5 10h1v1h-1zM3 12h1v1h-1z" fill="#84822a"/></g></svg></div>
<div class="b" style="left:871px;top:418px;width:18px;height:19px;"><svg width="17" height="16" viewBox="0 0 17 16" style="position:absolute;left:0px;top:0px"><g shape-rendering="crispEdges"><path d="M2 5h11v4h-6l-5 4z" fill="#f1f0ee"/><path d="M3 13l3.5-4h7.5l-3 4z" fill="#e9e962"/><path d="M11 1h1v1h-1zM15 1h1v1h-1zM15 3h1v1h-1zM14 4h1v1h-1zM12 4h1v1h-1zM14 10h1v1h-1zM13 11h1v1h-1zM12 12h1v1h-1zM3 13h1v1h-1zM5 13h1v1h-1zM7 13h1v1h-1zM9 13h1v1h-1zM11 13h1v1h-1z" fill="#000"/><path d="M10 4h1v1h-1zM8 4h1v1h-1zM6 4h1v1h-1zM5 3h1v1h-1zM3 3h1v1h-1zM1 5h1v1h-1zM1 7h1v1h-1zM1 9h1v1h-1zM1 11h1v1h-1zM12 6h1v1h-1z" fill="#8c8a8c"/><path d="M7 9h1v1h-1zM9 9h1v1h-1zM11 9h1v1h-1zM5 10h1v1h-1zM3 12h1v1h-1z" fill="#84822a"/></g></svg></div>
<div class="ck" style="left:893px;top:421px;width:13px;height:13px;"></div>
<div class="ck" style="left:932px;top:421px;width:13px;height:13px;"></div>
<div class="ck" style="left:989px;top:421px;width:13px;height:13px;"></div>
<span id="t77" class="t dis" style="top:421px;font-size:12px;line-height:12px;color:#848284;left:912.00px;letter-spacing:0.367px;">р/к</span>
<span id="t78" class="t dis" style="top:421px;font-size:12px;line-height:12px;color:#848284;left:950.30px;letter-spacing:0.051px;">тариф</span>
<div class="b1" style="left:1007px;top:418px;width:18px;height:19px;"></div>
<span id="t79" class="t dis" style="top:423px;font-size:12px;line-height:12px;color:#848284;left:1010.50px;letter-spacing:0.292px;">...</span>
<div class="wc" style="left:57px;top:238px;width:611px;height:298px;"></div>
<div class="tb" style="left:61px;top:242px;width:603px;height:18px;background:#848284;"></div>
<div style="left:63px;top:243px;width:12px;height:13px"><svg width="12" height="13" viewBox="0 0 12 13"><rect x="0" y="0" width="3" height="6" fill="#10a694"/><rect x="0" y="5" width="6" height="6.4" fill="#d6f3f7"/><rect x="6" y="8.4" width="4.4" height="3.4" fill="#bdf3ef"/><path d="M6.4 2.2L10.6 3.4L9.6 5.6H6.6Z" fill="#18a28c"/><path d="M6.6 1.2L9.8 2.6L9.4 3.4L6.4 2.4Z" fill="#e7f7f7"/><rect x="1.2" y="7" width="3.6" height="3.2" fill="#00008c"/><ellipse cx="8.3" cy="6.6" rx="1.9" ry="1.7" fill="#b5102c"/><circle cx="4.1" cy="3" r="2.1" fill="#bd1084"/><circle cx="3.5" cy="2.4" r="0.8" fill="#ffc7ef"/></svg></div>
<span id="t80" class="t tt" style="top:246px;font-size:11px;line-height:11px;color:#d6d3ce;left:81.00px;font-weight:bold;letter-spacing:0.342px;">Лимиты [Объект № 1321/1]</span>
<div class="cb" style="left:646px;top:244px;width:16px;height:14px;"><svg width="8" height="7" viewBox="0 0 8 7" shape-rendering="crispEdges" style="position:absolute;left:3px;top:2px"><path d="M0 0h2v1h1v1h2v-1h1v-1h2v1h-1v1h-1v1h-1v1h1v1h1v1h1v1h-2v-1h-1v-1h-2v1h-1v1h-2v-1h1v-1h1v-1h1v-1h-1v-1h-1v-1h-1z" fill="#000"/></svg></div>
<div class="cb" style="left:628px;top:244px;width:16px;height:14px;"><svg width="9" height="9" viewBox="0 0 9 9" shape-rendering="crispEdges" style="position:absolute;left:2px;top:1px"><path d="M0 0h9v9h-9zM1 2v6h7v-6z" fill="#000" fill-rule="evenodd"/></svg></div>
<div class="cb" style="left:612px;top:244px;width:16px;height:14px;"><svg width="6" height="2" viewBox="0 0 6 2" shape-rendering="crispEdges" style="position:absolute;left:3px;top:8px"><rect width="6" height="2" fill="#000"/></svg></div>
<div class="e" style="left:68px;top:269px;width:588px;height:220px;"></div>
<span id="t81" class="t " style="top:267px;font-size:12px;line-height:12px;color:#000;left:536.50px;letter-spacing:-0.287px;">Статус</span>
<div class="dith" style="left:80px;top:281px;width:12px;height:198px;"></div>
<div class="b" style="left:80px;top:281px;width:12px;height:15px;"><svg width="5" height="4" viewBox="0 0 5 4" shape-rendering="crispEdges" style="position:absolute;left:2px;top:4px"><path d="M0 3h5v1h-5z" fill="#fff"/><path d="M2 0h1v1h1v1h1v1h-5v-1h1v-1h1z" fill="#848284"/></svg></div>
<div class="b" style="left:80px;top:464px;width:12px;height:15px;"><svg width="5" height="4" viewBox="0 0 5 4" shape-rendering="crispEdges" style="position:absolute;left:2px;top:5px;overflow:visible"><path d="M3 3h1v-1h1v-1h1v1h-1v1h-1v1h-1z" fill="#fff"/><path d="M0 0h5v1h-1v1h-1v1h-1v-1h-1v-1h-1z" fill="#848284"/></svg></div>
<div class="f" style="left:93px;top:280px;width:200px;height:20px;background:#e0e0e0;"></div>
<span id="t82" class="t " style="top:286px;font-size:12px;line-height:12px;color:#848284;left:97.00px;letter-spacing:0.022px;">1 группа чистая вода</span>
<div class="b" style="left:276px;top:282px;width:15px;height:16px;"><svg width="7" height="4" viewBox="0 0 7 4" shape-rendering="crispEdges" style="position:absolute;left:3px;top:5px;overflow:visible"><path d="M1 1h7v1h-1v1h-1v1h-1v1h-1v-1h-1v-1h-1z" fill="#fff"/><path d="M0 0h7v1h-1v1h-1v1h-1v1h-1v-1h-1v-1h-1v-1h-1z" fill="#848284"/></svg></div>
<div class="f" style="left:293px;top:280px;width:126px;height:20px;background:#e0e0e0;"></div>
<div class="b" style="left:420px;top:280px;width:61px;height:20px;"></div>
<span id="t83" class="t dis" style="top:284px;font-size:12px;line-height:12px;color:#848284;left:423.00px;letter-spacing:0.266px;">Изменить</span>
<div class="f" style="left:481px;top:280px;width:147px;height:20px;background:#ffffff;"></div>
<span id="t84" class="t " style="top:284px;font-size:12px;line-height:12px;color:#848284;left:483.50px;letter-spacing:0.109px;">ОткрытыйОбъект</span>
<div class="b1" style="left:628px;top:280px;width:19px;height:20px;"></div>
<div class="f" style="left:93px;top:300px;width:200px;height:20px;background:#e0e0e0;"></div>
<span id="t85" class="t " style="top:306px;font-size:12px;line-height:12px;color:#848284;left:97.00px;letter-spacing:0.022px;">2 группа чистая вода</span>
<div class="b" style="left:276px;top:302px;width:15px;height:16px;"><svg width="7" height="4" viewBox="0 0 7 4" shape-rendering="crispEdges" style="position:absolute;left:3px;top:5px;overflow:visible"><path d="M1 1h7v1h-1v1h-1v1h-1v1h-1v-1h-1v-1h-1z" fill="#fff"/><path d="M0 0h7v1h-1v1h-1v1h-1v1h-1v-1h-1v-1h-1v-1h-1z" fill="#848284"/></svg></div>
<div class="f" style="left:293px;top:300px;width:126px;height:20px;background:#e0e0e0;"></div>
<div class="b" style="left:420px;top:300px;width:61px;height:20px;"></div>
<span id="t86" class="t dis" style="top:304px;font-size:12px;line-height:12px;color:#848284;left:423.00px;letter-spacing:0.266px;">Изменить</span>
<div class="f" style="left:481px;top:300px;width:147px;height:20px;background:#ffffff;"></div>
<span id="t87" class="t " style="top:304px;font-size:12px;line-height:12px;color:#848284;left:483.50px;letter-spacing:0.109px;">ОткрытыйОбъект</span>
<div class="b1" style="left:628px;top:300px;width:19px;height:20px;"></div>
<div class="f" style="left:93px;top:320px;width:200px;height:20px;background:#ffffc0;"></div>
<span id="t88" class="t " style="top:326px;font-size:12px;line-height:12px;color:#848284;left:97.00px;letter-spacing:0.022px;">3 группа чистая вода</span>
<div class="b" style="left:276px;top:322px;width:15px;height:16px;"><svg width="7" height="4" viewBox="0 0 7 4" shape-rendering="crispEdges" style="position:absolute;left:3px;top:5px;overflow:visible"><path d="M1 1h7v1h-1v1h-1v1h-1v1h-1v-1h-1v-1h-1z" fill="#fff"/><path d="M0 0h7v1h-1v1h-1v1h-1v1h-1v-1h-1v-1h-1v-1h-1z" fill="#848284"/></svg></div>
<div class="f" style="left:293px;top:320px;width:126px;height:20px;background:#ffffc0;"></div>
<div class="b" style="left:420px;top:320px;width:61px;height:20px;"></div>
<span id="t89" class="t dis" style="top:324px;font-size:12px;line-height:12px;color:#848284;left:423.00px;letter-spacing:0.266px;">Изменить</span>
<div class="f" style="left:481px;top:320px;width:147px;height:20px;background:#ffffc0;"></div>
<span id="t90" class="t " style="top:324px;font-size:12px;line-height:12px;color:#848284;left:483.50px;letter-spacing:0.109px;">ОткрытыйОбъект</span>
<div class="b1" style="left:628px;top:320px;width:19px;height:20px;"></div>
<div class="f" style="left:93px;top:340px;width:200px;height:20px;background:#e0e0e0;"></div>
<span id="t91" class="t " style="top:346px;font-size:12px;line-height:12px;color:#848284;left:97.00px;letter-spacing:0.022px;">4 группа чистая вода</span>
<div class="b" style="left:276px;top:342px;width:15px;height:16px;"><svg width="7" height="4" viewBox="0 0 7 4" shape-rendering="crispEdges" style="position:absolute;left:3px;top:5px;overflow:visible"><path d="M1 1h7v1h-1v1h-1v1h-1v1h-1v-1h-1v-1h-1z" fill="#fff"/><path d="M0 0h7v1h-1v1h-1v1h-1v1h-1v-1h-1v-1h-1v-1h-1z" fill="#848284"/></svg></div>
<div class="f" style="left:293px;top:340px;width:126px;height:20px;background:#e0e0e0;"></div>
<div class="b" style="left:420px;top:340px;width:61px;height:20px;"></div>
<span id="t92" class="t dis" style="top:344px;font-size:12px;line-height:12px;color:#848284;left:423.00px;letter-spacing:0.266px;">Изменить</span>
<div class="f" style="left:481px;top:340px;width:147px;height:20px;background:#ffffff;"></div>
<span id="t93" class="t " style="top:344px;font-size:12px;line-height:12px;color:#848284;left:483.50px;letter-spacing:0.109px;">ОткрытыйОбъект</span>
<div class="b1" style="left:628px;top:340px;width:19px;height:20px;"></div>
<div class="f" style="left:93px;top:360px;width:200px;height:20px;background:#e0e0e0;"></div>
<span id="t94" class="t " style="top:366px;font-size:12px;line-height:12px;color:#848284;left:97.00px;">1 группа техническая вода</span>
<div class="b" style="left:276px;top:362px;width:15px;height:16px;"><svg width="7" height="4" viewBox="0 0 7 4" shape-rendering="crispEdges" style="position:absolute;left:3px;top:5px;overflow:visible"><path d="M1 1h7v1h-1v1h-1v1h-1v1h-1v-1h-1v-1h-1z" fill="#fff"/><path d="M0 0h7v1h-1v1h-1v1h-1v1h-1v-1h-1v-1h-1v-1h-1z" fill="#848284"/></svg></div>
<div class="f" style="left:293px;top:360px;width:126px;height:20px;background:#e0e0e0;"></div>
<div class="b" style="left:420px;top:360px;width:61px;height:20px;"></div>
<span id="t95" class="t dis" style="top:364px;font-size:12px;line-height:12px;color:#848284;left:423.00px;letter-spacing:0.266px;">Изменить</span>
<div class="f" style="left:481px;top:360px;width:147px;height:20px;background:#ffffff;"></div>
<span id="t96" class="t " style="top:364px;font-size:12px;line-height:12px;color:#848284;left:483.50px;letter-spacing:0.109px;">ОткрытыйОбъект</span>
<div class="b1" style="left:628px;top:360px;width:19px;height:20px;"></div>
<div class="f" style="left:93px;top:380px;width:200px;height:20px;background:#e0e0e0;"></div>
<span id="t97" class="t " style="top:386px;font-size:12px;line-height:12px;color:#848284;left:97.00px;">2 группа техническая вода</span>
<div class="b" style="left:276px;top:382px;width:15px;height:16px;"><svg width="7" height="4" viewBox="0 0 7 4" shape-rendering="crispEdges" style="position:absolute;left:3px;top:5px;overflow:visible"><path d="M1 1h7v1h-1v1h-1v1h-1v1h-1v-1h-1v-1h-1z" fill="#fff"/><path d="M0 0h7v1h-1v1h-1v1h-1v1h-1v-1h-1v-1h-1v-1h-1z" fill="#848284"/></svg></div>
<div class="f" style="left:293px;top:380px;width:126px;height:20px;background:#e0e0e0;"></div>
<div class="b" style="left:420px;top:380px;width:61px;height:20px;"></div>
<span id="t98" class="t dis" style="top:384px;font-size:12px;line-height:12px;color:#848284;left:423.00px;letter-spacing:0.266px;">Изменить</span>
<div class="f" style="left:481px;top:380px;width:147px;height:20px;background:#ffffff;"></div>
<span id="t99" class="t " style="top:384px;font-size:12px;line-height:12px;color:#848284;left:483.50px;letter-spacing:0.109px;">ОткрытыйОбъект</span>
<div class="b1" style="left:628px;top:380px;width:19px;height:20px;"></div>
<div class="f" style="left:93px;top:400px;width:200px;height:20px;background:#e0e0e0;"></div>
<span id="t100" class="t " style="top:406px;font-size:12px;line-height:12px;color:#848284;left:97.00px;">3 группа техническая вода</span>
<div class="b" style="left:276px;top:402px;width:15px;height:16px;"><svg width="7" height="4" viewBox="0 0 7 4" shape-rendering="crispEdges" style="position:absolute;left:3px;top:5px;overflow:visible"><path d="M1 1h7v1h-1v1h-1v1h-1v1h-1v-1h-1v-1h-1z" fill="#fff"/><path d="M0 0h7v1h-1v1h-1v1h-1v1h-1v-1h-1v-1h-1v-1h-1z" fill="#848284"/></svg></div>
<div class="f" style="left:293px;top:400px;width:126px;height:20px;background:#e0e0e0;"></div>
<div class="b" style="left:420px;top:400px;width:61px;height:20px;"></div>
<span id="t101" class="t dis" style="top:404px;font-size:12px;line-height:12px;color:#848284;left:423.00px;letter-spacing:0.266px;">Изменить</span>
<div class="f" style="left:481px;top:400px;width:147px;height:20px;background:#ffffff;"></div>
<span id="t102" class="t " style="top:404px;font-size:12px;line-height:12px;color:#848284;left:483.50px;letter-spacing:0.109px;">ОткрытыйОбъект</span>
<div class="b1" style="left:628px;top:400px;width:19px;height:20px;"></div>
<div class="f" style="left:93px;top:420px;width:200px;height:20px;background:#e0e0e0;"></div>
<span id="t103" class="t " style="top:426px;font-size:12px;line-height:12px;color:#848284;left:97.00px;">4 группа техническая вода</span>
<div class="b" style="left:276px;top:422px;width:15px;height:16px;"><svg width="7" height="4" viewBox="0 0 7 4" shape-rendering="crispEdges" style="position:absolute;left:3px;top:5px;overflow:visible"><path d="M1 1h7v1h-1v1h-1v1h-1v1h-1v-1h-1v-1h-1z" fill="#fff"/><path d="M0 0h7v1h-1v1h-1v1h-1v1h-1v-1h-1v-1h-1v-1h-1z" fill="#848284"/></svg></div>
<div class="f" style="left:293px;top:420px;width:126px;height:20px;background:#e0e0e0;"></div>
<div class="b" style="left:420px;top:420px;width:61px;height:20px;"></div>
<span id="t104" class="t dis" style="top:424px;font-size:12px;line-height:12px;color:#848284;left:423.00px;letter-spacing:0.266px;">Изменить</span>
<div class="f" style="left:481px;top:420px;width:147px;height:20px;background:#ffffff;"></div>
<span id="t105" class="t " style="top:424px;font-size:12px;line-height:12px;color:#848284;left:483.50px;letter-spacing:0.109px;">ОткрытыйОбъект</span>
<div class="b1" style="left:628px;top:420px;width:19px;height:20px;"></div>
<div class="f" style="left:93px;top:440px;width:200px;height:20px;background:#e0e0e0;"></div>
<span id="t106" class="t " style="top:446px;font-size:12px;line-height:12px;color:#848284;left:97.00px;">1 группа сточные воды</span>
<div class="b" style="left:276px;top:442px;width:15px;height:16px;"><svg width="7" height="4" viewBox="0 0 7 4" shape-rendering="crispEdges" style="position:absolute;left:3px;top:5px;overflow:visible"><path d="M1 1h7v1h-1v1h-1v1h-1v1h-1v-1h-1v-1h-1z" fill="#fff"/><path d="M0 0h7v1h-1v1h-1v1h-1v1h-1v-1h-1v-1h-1v-1h-1z" fill="#848284"/></svg></div>
<div class="f" style="left:293px;top:440px;width:126px;height:20px;background:#e0e0e0;"></div>
<div class="b" style="left:420px;top:440px;width:61px;height:20px;"></div>
<span id="t107" class="t dis" style="top:444px;font-size:12px;line-height:12px;color:#848284;left:423.00px;letter-spacing:0.266px;">Изменить</span>
<div class="f" style="left:481px;top:440px;width:147px;height:20px;background:#ffffff;"></div>
<span id="t108" class="t " style="top:444px;font-size:12px;line-height:12px;color:#848284;left:483.50px;letter-spacing:0.109px;">ОткрытыйОбъект</span>
<div class="b1" style="left:628px;top:440px;width:19px;height:20px;"></div>
<div class="f" style="left:93px;top:460px;width:200px;height:20px;background:#e0e0e0;"></div>
<span id="t109" class="t " style="top:466px;font-size:12px;line-height:12px;color:#848284;left:97.00px;">2 группа сточные воды</span>
<div class="b" style="left:276px;top:462px;width:15px;height:16px;"><svg width="7" height="4" viewBox="0 0 7 4" shape-rendering="crispEdges" style="position:absolute;left:3px;top:5px;overflow:visible"><path d="M1 1h7v1h-1v1h-1v1h-1v1h-1v-1h-1v-1h-1z" fill="#fff"/><path d="M0 0h7v1h-1v1h-1v1h-1v1h-1v-1h-1v-1h-1v-1h-1z" fill="#848284"/></svg></div>
<div class="f" style="left:293px;top:460px;width:126px;height:20px;background:#e0e0e0;"></div>
<div class="b" style="left:420px;top:460px;width:61px;height:20px;"></div>
<span id="t110" class="t dis" style="top:464px;font-size:12px;line-height:12px;color:#848284;left:423.00px;letter-spacing:0.266px;">Изменить</span>
<div class="f" style="left:481px;top:460px;width:147px;height:20px;background:#ffffff;"></div>
<span id="t111" class="t " style="top:464px;font-size:12px;line-height:12px;color:#848284;left:483.50px;letter-spacing:0.109px;">ОткрытыйОбъект</span>
<div class="b1" style="left:628px;top:460px;width:19px;height:20px;"></div>
<div class="ck" style="left:93px;top:502px;width:13px;height:13px;"></div>
<div class="wc" style="left:112px;top:345px;width:476px;height:347px;"></div>
<div class="tb" style="left:116px;top:349px;width:468px;height:18px;background:#08246b;"></div>
<div style="left:118px;top:350px;width:12px;height:13px"><svg width="12" height="13" viewBox="0 0 12 13"><rect x="0" y="0" width="3" height="6" fill="#10a694"/><rect x="0" y="5" width="6" height="6.4" fill="#d6f3f7"/><rect x="6" y="8.4" width="4.4" height="3.4" fill="#bdf3ef"/><path d="M6.4 2.2L10.6 3.4L9.6 5.6H6.6Z" fill="#18a28c"/><path d="M6.6 1.2L9.8 2.6L9.4 3.4L6.4 2.4Z" fill="#e7f7f7"/><rect x="1.2" y="7" width="3.6" height="3.2" fill="#00008c"/><ellipse cx="8.3" cy="6.6" rx="1.9" ry="1.7" fill="#b5102c"/><circle cx="4.1" cy="3" r="2.1" fill="#bd1084"/><circle cx="3.5" cy="2.4" r="0.8" fill="#ffc7ef"/></svg></div>
<span id="t112" class="t tt" style="top:353px;font-size:11px;line-height:11px;color:#fff;left:136.00px;font-weight:bold;letter-spacing:0.247px;">Лимиты 3 гр. чистая вода [Объект № 1321/1]</span>
<div class="cb" style="left:566px;top:351px;width:16px;height:14px;"><svg width="8" height="7" viewBox="0 0 8 7" shape-rendering="crispEdges" style="position:absolute;left:3px;top:2px"><path d="M0 0h2v1h1v1h2v-1h1v-1h2v1h-1v1h-1v1h-1v1h1v1h1v1h1v1h-2v-1h-1v-1h-2v1h-1v1h-2v-1h1v-1h1v-1h1v-1h-1v-1h-1v-1h-1z" fill="#000"/></svg></div>
<div class="cb" style="left:548px;top:351px;width:16px;height:14px;"><svg width="9" height="9" viewBox="0 0 9 9" shape-rendering="crispEdges" style="position:absolute;left:2px;top:1px"><path d="M0 0h9v9h-9zM1 2v6h7v-6z" fill="#000" fill-rule="evenodd"/></svg></div>
<div class="cb" style="left:532px;top:351px;width:16px;height:14px;"><svg width="6" height="2" viewBox="0 0 6 2" shape-rendering="crispEdges" style="position:absolute;left:3px;top:8px"><rect width="6" height="2" fill="#000"/></svg></div>
<div class="e" style="left:123px;top:378px;width:453px;height:272px;"></div>
<div class="" style="left:133px;top:378px;width:65.5px;height:2px;background:#d6d3ce;"></div>
<span id="t113" class="t " style="top:373px;font-size:13px;line-height:13px;color:#000;left:137.00px;letter-spacing:-0.138px;">Значения</span>
<span id="t114" class="t " style="top:395px;font-size:12px;line-height:12px;color:#000;left:177.00px;letter-spacing:0.307px;">Дата</span>
<span id="t115" class="t " style="top:395px;font-size:12px;line-height:12px;color:#000;left:259.00px;letter-spacing:0.254px;">Значение</span>
<span id="t116" class="t " style="top:395px;font-size:12px;line-height:12px;color:#000;left:338.50px;letter-spacing:0.251px;">Ед. измерения</span>
<span id="t117" class="t " style="top:395px;font-size:12px;line-height:12px;color:#000;left:453.50px;letter-spacing:0.264px;">Состояние</span>
<div class="dith" style="left:133px;top:409px;width:12px;height:197px;"></div>
<div class="b" style="left:133px;top:409px;width:12px;height:15px;"><svg width="5" height="4" viewBox="0 0 5 4" shape-rendering="crispEdges" style="position:absolute;left:2px;top:4px"><path d="M0 3h5v1h-5z" fill="#fff"/><path d="M2 0h1v1h1v1h1v1h-5v-1h1v-1h1z" fill="#848284"/></svg></div>
<div class="b" style="left:133px;top:592px;width:12px;height:15px;"><svg width="5" height="4" viewBox="0 0 5 4" shape-rendering="crispEdges" style="position:absolute;left:2px;top:5px;overflow:visible"><path d="M3 3h1v-1h1v-1h1v1h-1v1h-1v1h-1z" fill="#fff"/><path d="M0 0h5v1h-1v1h-1v1h-1v-1h-1v-1h-1z" fill="#848284"/></svg></div>
<div class="f" style="left:147px;top:408px;width:86px;height:20px;background:#ffffc0;"></div>
<div class="f" style="left:233px;top:408px;width:107px;height:20px;background:#ffffc0;"></div>
<div class="f" style="left:340px;top:408px;width:79px;height:20px;background:#ffffc0;"></div>
<div class="f" style="left:419px;top:408px;width:130px;height:20px;background:#ffffc0;"></div>
<div class="b1" style="left:551px;top:408px;width:20px;height:20px;"></div>
<div class="f" style="left:147px;top:428px;width:86px;height:20px;background:#e0e0e0;"></div>
<div class="f" style="left:233px;top:428px;width:107px;height:20px;background:#e0e0e0;"></div>
<div class="f" style="left:340px;top:428px;width:79px;height:20px;background:#e0e0e0;"></div>
<div class="f" style="left:419px;top:428px;width:130px;height:20px;background:#e0e0e0;"></div>
<div class="b1" style="left:551px;top:428px;width:20px;height:20px;"></div>
<div class="f" style="left:147px;top:448px;width:86px;height:20px;background:#e0e0e0;"></div>
<div class="f" style="left:233px;top:448px;width:107px;height:20px;background:#e0e0e0;"></div>
<div class="f" style="left:340px;top:448px;width:79px;height:20px;background:#e0e0e0;"></div>
<div class="f" style="left:419px;top:448px;width:130px;height:20px;background:#e0e0e0;"></div>
<div class="b1" style="left:551px;top:448px;width:20px;height:20px;"></div>
<div class="f" style="left:147px;top:468px;width:86px;height:20px;background:#e0e0e0;"></div>
<div class="f" style="left:233px;top:468px;width:107px;height:20px;background:#e0e0e0;"></div>
<div class="f" style="left:340px;top:468px;width:79px;height:20px;background:#e0e0e0;"></div>
<div class="f" style="left:419px;top:468px;width:130px;height:20px;background:#e0e0e0;"></div>
<div class="b1" style="left:551px;top:468px;width:20px;height:20px;"></div>
<div class="f" style="left:147px;top:488px;width:86px;height:20px;background:#e0e0e0;"></div>
<div class="f" style="left:233px;top:488px;width:107px;height:20px;background:#e0e0e0;"></div>
<div class="f" style="left:340px;top:488px;width:79px;height:20px;background:#e0e0e0;"></div>
<div class="f" style="left:419px;top:488px;width:130px;height:20px;background:#e0e0e0;"></div>
<div class="b1" style="left:551px;top:488px;width:20px;height:20px;"></div>
<div class="f" style="left:147px;top:508px;width:86px;height:20px;background:#e0e0e0;"></div>
<div class="f" style="left:233px;top:508px;width:107px;height:20px;background:#e0e0e0;"></div>
<div class="f" style="left:340px;top:508px;width:79px;height:20px;background:#e0e0e0;"></div>
<div class="f" style="left:419px;top:508px;width:130px;height:20px;background:#e0e0e0;"></div>
<div class="b1" style="left:551px;top:508px;width:20px;height:20px;"></div>
<div class="f" style="left:147px;top:528px;width:86px;height:20px;background:#e0e0e0;"></div>
<div class="f" style="left:233px;top:528px;width:107px;height:20px;background:#e0e0e0;"></div>
<div class="f" style="left:340px;top:528px;width:79px;height:20px;background:#e0e0e0;"></div>
<div class="f" style="left:419px;top:528px;width:130px;height:20px;background:#e0e0e0;"></div>
<div class="b1" style="left:551px;top:528px;width:20px;height:20px;"></div>
<div class="f" style="left:147px;top:548px;width:86px;height:20px;background:#e0e0e0;"></div>
<div class="f" style="left:233px;top:548px;width:107px;height:20px;background:#e0e0e0;"></div>
<div class="f" style="left:340px;top:548px;width:79px;height:20px;background:#e0e0e0;"></div>
<div class="f" style="left:419px;top:548px;width:130px;height:20px;background:#e0e0e0;"></div>
<div class="b1" style="left:551px;top:548px;width:20px;height:20px;"></div>
<div class="f" style="left:147px;top:568px;width:86px;height:20px;background:#e0e0e0;"></div>
<div class="f" style="left:233px;top:568px;width:107px;height:20px;background:#e0e0e0;"></div>
<div class="f" style="left:340px;top:568px;width:79px;height:20px;background:#e0e0e0;"></div>
<div class="f" style="left:419px;top:568px;width:130px;height:20px;background:#e0e0e0;"></div>
<div class="b1" style="left:551px;top:568px;width:20px;height:20px;"></div>
<div class="f" style="left:147px;top:588px;width:86px;height:20px;background:#e0e0e0;"></div>
<div class="f" style="left:233px;top:588px;width:107px;height:20px;background:#e0e0e0;"></div>
<div class="f" style="left:340px;top:588px;width:79px;height:20px;background:#e0e0e0;"></div>
<div class="f" style="left:419px;top:588px;width:130px;height:20px;background:#e0e0e0;"></div>
<div class="b1" style="left:551px;top:588px;width:20px;height:20px;"></div>
<span id="t118" class="t " style="top:412px;font-size:12px;line-height:12px;color:#000;left:149.50px;letter-spacing:0.160px;">01.01.2008</span>
<span id="t119" class="t " style="top:412px;font-size:12px;line-height:12px;color:#000;right:727.50px;">0.700</span>
<span id="t120" class="t " style="top:412px;font-size:12px;line-height:12px;color:#000;left:342.30px;">м3/сут.</span>
<span id="t121" class="t " style="top:412px;font-size:12px;line-height:12px;color:#000;left:421.50px;letter-spacing:0.148px;">ОткрытыйОбъект</span>
<div class="f" style="left:147px;top:617px;width:86px;height:20px;background:#ffffff;"></div>
<div class="f" style="left:233px;top:617px;width:107px;height:20px;background:#ffffff;"></div>
<div class="f" style="left:340px;top:617px;width:79px;height:20px;background:#e0e0e0;"></div>
<span id="t122" class="t " style="top:621px;font-size:12px;line-height:12px;color:#000;left:342.30px;">м3/сут.</span>
<div class="b" style="left:420px;top:617px;width:77px;height:20px;"></div>
<span id="t123" class="t " style="top:621px;font-size:12px;line-height:12px;color:#000;left:426.00px;letter-spacing:0.335px;">Установить</span>
<div class="b" style="left:292px;top:657px;width:64px;height:23px;"></div>
<span id="t124" class="t " style="top:662px;font-size:13px;line-height:13px;color:#000;left:315.50px;letter-spacing:-0.297px;">OK</span>
<div class="sf" style="left:5px;top:781px;width:110px;height:15px;"></div>
<span id="t125" class="t tt" style="top:783px;font-size:11px;line-height:11px;color:#000;left:7.00px;letter-spacing:0.000px;">Запись: 1/1</span>
<div class="sf" style="left:117px;top:781px;width:73px;height:15px;"></div>
<div class="sf" style="left:192px;top:781px;width:89px;height:15px;"></div>
<div class="sf" style="left:283px;top:781px;width:36px;height:15px;"></div>
<span id="t126" class="t tt" style="top:783px;font-size:11px;line-height:11px;color:#000;left:285.00px;letter-spacing:-1.145px;">&lt;OSC&gt;</span>
<div class="sf" style="left:321px;top:781px;width:37px;height:15px;"></div>
<span id="t127" class="t tt" style="top:783px;font-size:11px;line-height:11px;color:#000;left:323.00px;letter-spacing:-0.996px;">&lt;DBG&gt;</span>
<div class="sf" style="left:360px;top:781px;width:697px;height:15px;"></div>
</div></body></html>
